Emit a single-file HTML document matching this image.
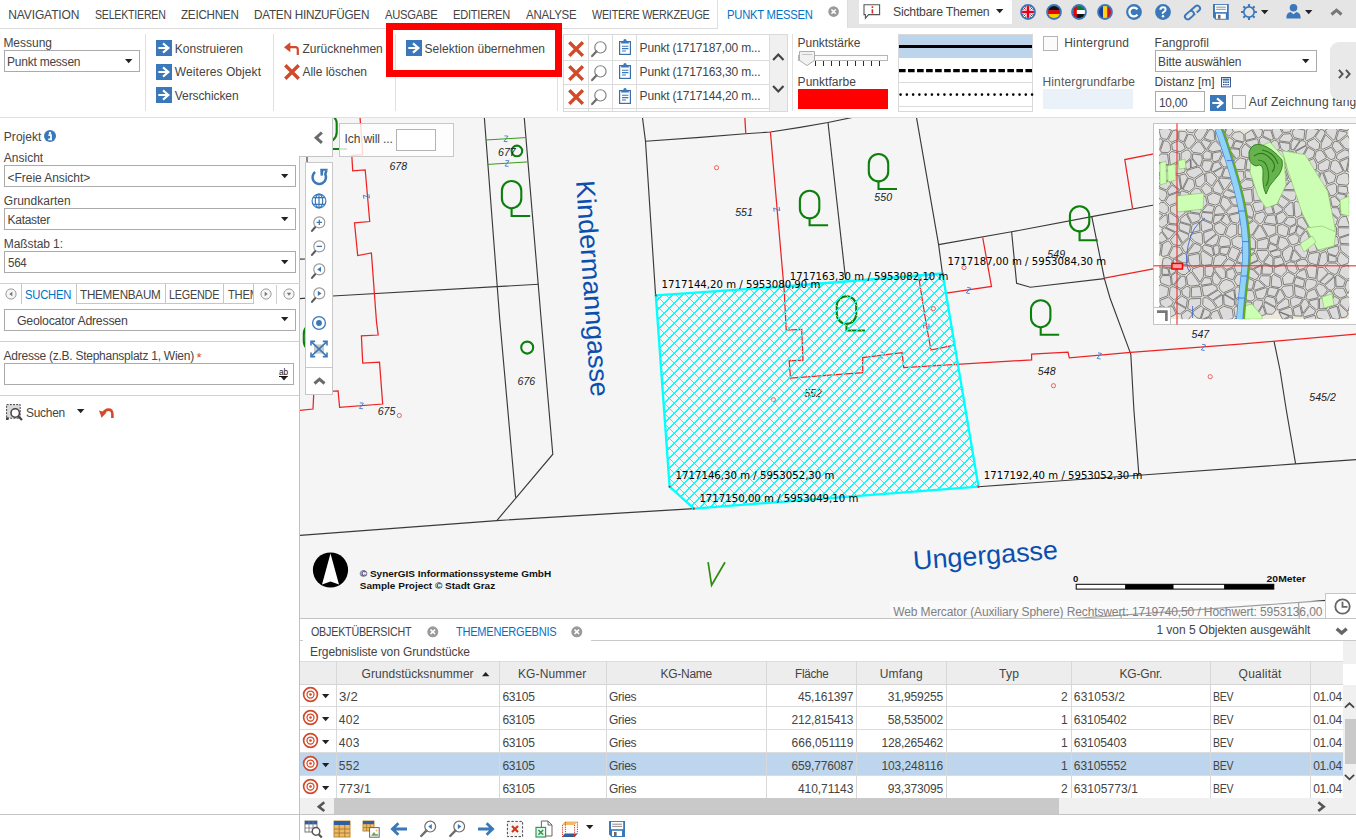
<!DOCTYPE html>
<html lang="de"><head><meta charset="utf-8"><title>WebOffice - Punkt messen</title>
<style>
html,body{margin:0;padding:0}
body{width:1356px;height:840px;position:relative;overflow:hidden;background:#fff;font-family:"Liberation Sans",Arial,sans-serif;font-size:12.5px;color:#444}
.a{position:absolute;display:block}
.t{position:absolute;white-space:nowrap;display:block}
svg{overflow:visible}
</style></head><body>
<!-- gen_top -->
<div class="a " style="left:0px;top:28px;width:718px;height:1px;background:#dcdcdc"></div>
<div class="a " style="left:847px;top:0px;width:509px;height:28px;background:#e5e5e5"></div>
<div class="a " style="left:717px;top:0px;width:1px;height:28px;background:#e0e0e0"></div>
<div class="a " style="left:847px;top:0px;width:1px;height:28px;background:#dcdcdc"></div>
<span class="t " style="left:8.2px;top:6.6px;font-size:12px;line-height:16px;letter-spacing:-0.103px;color:#444;">NAVIGATION</span>
<span class="t " style="left:94.5px;top:6.6px;font-size:12px;line-height:16px;letter-spacing:-0.25px;transform:scaleX(0.8829);transform-origin:0 50%;color:#444;">SELEKTIEREN</span>
<span class="t " style="left:180.7px;top:6.6px;font-size:12px;line-height:16px;letter-spacing:-0.25px;transform:scaleX(0.9700);transform-origin:0 50%;color:#444;">ZEICHNEN</span>
<span class="t " style="left:254.0px;top:6.6px;font-size:12px;line-height:16px;letter-spacing:-0.25px;transform:scaleX(0.9778);transform-origin:0 50%;color:#444;">DATEN HINZUFÜGEN</span>
<span class="t " style="left:385.4px;top:6.6px;font-size:12px;line-height:16px;letter-spacing:-0.25px;transform:scaleX(0.9324);transform-origin:0 50%;color:#444;">AUSGABE</span>
<span class="t " style="left:453.1px;top:6.6px;font-size:12px;line-height:16px;letter-spacing:-0.25px;transform:scaleX(0.9225);transform-origin:0 50%;color:#444;">EDITIEREN</span>
<span class="t " style="left:525.8px;top:6.6px;font-size:12px;line-height:16px;letter-spacing:-0.25px;transform:scaleX(0.9572);transform-origin:0 50%;color:#444;">ANALYSE</span>
<span class="t " style="left:591.8px;top:6.6px;font-size:12px;line-height:16px;letter-spacing:-0.25px;transform:scaleX(0.8961);transform-origin:0 50%;color:#444;">WEITERE WERKZEUGE</span>
<span class="t " style="left:726.5px;top:6.6px;font-size:12px;line-height:16px;letter-spacing:-0.25px;transform:scaleX(0.9355);transform-origin:0 50%;color:#0072c6;">PUNKT MESSEN</span>
<svg class="a" style="left:827.8px;top:5.8px" width="11.2" height="11.2" viewBox="-6 -6 12 12"><circle r="5.7" fill="#9a9a9a"/><path d="M-2.3 -2.3L2.3 2.3M2.3 -2.3L-2.3 2.3" stroke="#fff" stroke-width="1.7"/></svg>
<div class="a " style="left:859px;top:0px;width:153px;height:24px;background:#fff"></div>
<svg class="a" style="left:863px;top:4px" width="18" height="16" viewBox="0 0 18 16"><path d="M1 0.8H16.6V10.6H5.6L2.4 14.2V10.6H1Z" fill="#fff" stroke="#555" stroke-width="1.1"/><path d="M9.4 2.2V3.9M9.4 5.2V9.6" stroke="#e02a1a" stroke-width="1.6"/></svg>
<span class="t " style="left:892.6px;top:4.0px;font-size:13px;line-height:16px;letter-spacing:-0.25px;transform:scaleX(0.9448);transform-origin:0 50%;color:#444;">Sichtbare Themen</span>
<svg class="a" style="left:996.1px;top:8.9px" width="7.4" height="4.2" viewBox="0 0 7.4 4.2"><path d="M0 0H7.4L3.7 4.2Z" fill="#222"/></svg>
<svg class="a" style="left:1019.9px;top:4px" width="16" height="16" viewBox="-8 -8 16 16"><defs><clipPath id="fc1027"><circle r="6"/></clipPath></defs><circle r="7.9" fill="#3b78b9"/><g clip-path="url(#fc1027)"><rect x="-6" y="-6" width="12" height="12" fill="#2a4f9c"/><path d="M-6 -6L6 6M6 -6L-6 6" stroke="#fff" stroke-width="2.6"/><path d="M-6 -6L6 6M6 -6L-6 6" stroke="#e3001b" stroke-width="1"/><path d="M0 -6V6M-6 0H6" stroke="#fff" stroke-width="4.4"/><path d="M0 -6V6M-6 0H6" stroke="#e3001b" stroke-width="2.6"/></g></svg>
<svg class="a" style="left:1046px;top:4px" width="16" height="16" viewBox="-8 -8 16 16"><defs><clipPath id="fc1054"><circle r="6"/></clipPath></defs><circle r="7.9" fill="#3b78b9"/><g clip-path="url(#fc1054)"><rect x="-6" y="-6" width="12" height="4.2" fill="#111"/><rect x="-6" y="-1.8" width="12" height="3.8" fill="#e00"/><rect x="-6" y="2" width="12" height="4" fill="#fc0"/></g></svg>
<svg class="a" style="left:1071.1px;top:4px" width="16" height="16" viewBox="-8 -8 16 16"><defs><clipPath id="fc1079"><circle r="6"/></clipPath></defs><circle r="7.9" fill="#3b78b9"/><g clip-path="url(#fc1079)"><rect x="-6" y="-6" width="12" height="4" fill="#0a7a3a"/><rect x="-6" y="-2" width="12" height="4" fill="#fff"/><rect x="-6" y="2" width="12" height="4" fill="#111"/><rect x="-6" y="-6" width="3.8" height="12" fill="#e00"/></g></svg>
<svg class="a" style="left:1097px;top:4px" width="16" height="16" viewBox="-8 -8 16 16"><defs><clipPath id="fc1105"><circle r="6"/></clipPath></defs><circle r="7.9" fill="#3b78b9"/><g clip-path="url(#fc1105)"><rect x="-6" y="-6" width="4" height="12" fill="#1c3f94"/><rect x="-2" y="-6" width="4.4" height="12" fill="#fcd116"/><rect x="2.4" y="-6" width="4" height="12" fill="#ce1126"/></g></svg>
<svg class="a" style="left:1125.9px;top:4px" width="16" height="16" viewBox="-8 -8 16 16"><circle r="7.9" fill="#3b78b9"/><path d="M3.4 -2.6A4.4 4.4 0 1 0 3.4 2.6" fill="none" stroke="#fff" stroke-width="2.4"/></svg>
<svg class="a" style="left:1154.9px;top:4px" width="16" height="16" viewBox="-8 -8 16 16"><circle r="7.9" fill="#3b78b9"/><path d="M-2.6 -2.2Q-2.6 -4.8 0 -4.8T2.6 -2.4Q2.6 -1 0.9 -0.2T0 1.8" fill="none" stroke="#fff" stroke-width="2"/><circle cx="0" cy="4.2" r="1.25" fill="#fff"/></svg>
<svg class="a" style="left:1183.6px;top:3.8px" width="17" height="17" viewBox="0 0 17 17"><g fill="none" stroke="#3b78b9" stroke-width="1.9" transform="rotate(-41 8.5 8.5)"><rect x="-0.6" y="5.7" width="10" height="5.6" rx="2.8"/><path d="M8.4 5.7H14.8A2.8 2.8 0 0 1 14.8 11.3H11.6M9.6 11.3H8.4"/></g></svg>
<svg class="a" style="left:1213.2px;top:4.1px" width="15.8" height="15.8" viewBox="0 0 16 16"><path d="M0 0H16V16H2.6L0 13.4Z" fill="#3b78b9"/><rect x="2" y="0.9" width="12.2" height="7.3" fill="#fff"/><path d="M3.2 3.2H13M3.2 5.4H13" stroke="#8c8c8c" stroke-width="1"/><rect x="3" y="9.8" width="10" height="5.2" fill="#fff"/><rect x="5" y="11" width="2.6" height="4" fill="#6a6a6a"/></svg>
<svg class="a" style="left:1241px;top:3.9px" width="16" height="16" viewBox="-8 -8 16 16"><circle r="5.2" fill="none" stroke="#3b78b9" stroke-width="1.7"/><g fill="#3b78b9"><rect x="-1.05" y="-8" width="2.1" height="2.4" rx=".6" transform="rotate(0)"/><rect x="-1.05" y="-8" width="2.1" height="2.4" rx=".6" transform="rotate(45)"/><rect x="-1.05" y="-8" width="2.1" height="2.4" rx=".6" transform="rotate(90)"/><rect x="-1.05" y="-8" width="2.1" height="2.4" rx=".6" transform="rotate(135)"/><rect x="-1.05" y="-8" width="2.1" height="2.4" rx=".6" transform="rotate(180)"/><rect x="-1.05" y="-8" width="2.1" height="2.4" rx=".6" transform="rotate(225)"/><rect x="-1.05" y="-8" width="2.1" height="2.4" rx=".6" transform="rotate(270)"/><rect x="-1.05" y="-8" width="2.1" height="2.4" rx=".6" transform="rotate(315)"/></g></svg>
<svg class="a" style="left:1260.9px;top:9.9px" width="7.4" height="4.2" viewBox="0 0 7.4 4.2"><path d="M0 0H7.4L3.7 4.2Z" fill="#222"/></svg>
<svg class="a" style="left:1285.5px;top:4px" width="15" height="15" viewBox="0 0 15 15"><circle cx="7.5" cy="3.8" r="3.8" fill="#3b78b9"/><path d="M0.4 14.6Q0 8.6 4.6 8L7.5 10.2L10.4 8Q15 8.6 14.6 14.6Z" fill="#3b78b9"/></svg>
<svg class="a" style="left:1304.8px;top:9.9px" width="7.4" height="4.2" viewBox="0 0 7.4 4.2"><path d="M0 0H7.4L3.7 4.2Z" fill="#222"/></svg>
<svg class="a" style="left:1330px;top:7.7px" width="13" height="8" viewBox="0 0 13 8"><path d="M1.5 6.5L6.5 2.14286L11.5 6.5" fill="none" stroke="#777" stroke-width="3"/></svg>
<div class="a " style="left:0px;top:117px;width:1356px;height:1px;background:#e0e0e0"></div>
<div class="a " style="left:145px;top:34px;width:1px;height:77px;background:#e0e0e0"></div>
<div class="a " style="left:273px;top:34px;width:1px;height:77px;background:#e0e0e0"></div>
<div class="a " style="left:395px;top:34px;width:1px;height:77px;background:#e0e0e0"></div>
<div class="a " style="left:557px;top:34px;width:1px;height:77px;background:#e0e0e0"></div>
<div class="a " style="left:792px;top:34px;width:1px;height:77px;background:#e0e0e0"></div>
<span class="t " style="left:3.4px;top:35.0px;font-size:12px;line-height:16px;letter-spacing:-0.015px;color:#444;">Messung</span>
<div class="a " style="left:4px;top:50px;width:136px;height:22px;border:1px solid #ababab;box-sizing:border-box;background:#fff"></div>
<span class="t " style="left:7.0px;top:54.2px;font-size:12px;line-height:16px;letter-spacing:-0.231px;color:#444;">Punkt messen</span>
<svg class="a" style="left:125.3px;top:58.7px" width="7.4" height="4.2" viewBox="0 0 7.4 4.2"><path d="M0 0H7.4L3.7 4.2Z" fill="#222"/></svg>
<svg class="a" style="left:156px;top:40px" width="16" height="16" viewBox="0 0 16 16"><rect width="16" height="16" fill="#3b78b9"/><path d="M2.3 8H12.4M7 3.4L12.4 8L7 12.6" fill="none" stroke="#fff" stroke-width="2.1"/></svg>
<span class="t " style="left:174.8px;top:41.3px;font-size:12px;line-height:16px;letter-spacing:0.015px;color:#444;">Konstruieren</span>
<svg class="a" style="left:156px;top:64px" width="16" height="16" viewBox="0 0 16 16"><rect width="16" height="16" fill="#3b78b9"/><path d="M2.3 8H12.4M7 3.4L12.4 8L7 12.6" fill="none" stroke="#fff" stroke-width="2.1"/></svg>
<span class="t " style="left:174.8px;top:63.8px;font-size:12px;line-height:16px;letter-spacing:0.076px;color:#444;">Weiteres Objekt</span>
<svg class="a" style="left:156px;top:87px" width="16" height="16" viewBox="0 0 16 16"><rect width="16" height="16" fill="#3b78b9"/><path d="M2.3 8H12.4M7 3.4L12.4 8L7 12.6" fill="none" stroke="#fff" stroke-width="2.1"/></svg>
<span class="t " style="left:174.8px;top:88.3px;font-size:12px;line-height:16px;letter-spacing:-0.090px;color:#444;">Verschicken</span>
<svg class="a" style="left:284px;top:42.4px" width="16" height="14" viewBox="0 0 16 14"><path d="M2.5 5.2H11.5Q13.8 5.2 13.8 7.6V13" fill="none" stroke="#d04a2b" stroke-width="2.2"/><path d="M0 5.2L6.3 0.2V10.2Z" fill="#d04a2b"/></svg>
<span class="t " style="left:302.4px;top:41.3px;font-size:12px;line-height:16px;letter-spacing:0.033px;color:#444;">Zurücknehmen</span>
<svg class="a" style="left:284px;top:64px" width="16" height="16" viewBox="0 0 16 16"><path d="M1.3 1.3L14.7 14.7M14.7 1.3L1.3 14.7" fill="none" stroke="#d04a2b" stroke-width="3.4"/></svg>
<span class="t " style="left:302.4px;top:63.8px;font-size:12px;line-height:16px;letter-spacing:-0.010px;color:#444;">Alle löschen</span>
<svg class="a" style="left:406px;top:40px" width="16" height="16" viewBox="0 0 16 16"><rect width="16" height="16" fill="#3b78b9"/><path d="M2.3 8H12.4M7 3.4L12.4 8L7 12.6" fill="none" stroke="#fff" stroke-width="2.1"/></svg>
<span class="t " style="left:424.6px;top:41.0px;font-size:12px;line-height:16px;letter-spacing:0.017px;color:#444;">Selektion übernehmen</span>
<div class="a " style="left:563px;top:34px;width:225px;height:78px;border:1px solid #d9d9d9;box-sizing:border-box;background:#fff;overflow:hidden"></div>
<div class="a " style="left:769px;top:35px;width:18px;height:76px;background:#f0f0f0"></div>
<div class="a " style="left:588px;top:35px;width:1px;height:76px;background:#dcdcdc"></div>
<div class="a " style="left:612px;top:35px;width:1px;height:76px;background:#dcdcdc"></div>
<div class="a " style="left:636px;top:35px;width:1px;height:76px;background:#dcdcdc"></div>
<div class="a " style="left:769px;top:35px;width:1px;height:76px;background:#dcdcdc"></div>
<div class="a " style="left:564px;top:60px;width:205px;height:1px;background:#dcdcdc"></div>
<div class="a " style="left:564px;top:84px;width:205px;height:1px;background:#dcdcdc"></div>
<div class="a " style="left:564px;top:108px;width:205px;height:1px;background:#dcdcdc"></div>
<svg class="a" style="left:567.9px;top:40.8px" width="16.2" height="16.2" viewBox="0 0 16 16"><path d="M1.3 1.3L14.7 14.7M14.7 1.3L1.3 14.7" fill="none" stroke="#d04a2b" stroke-width="3.4"/></svg>
<svg class="a" style="left:590.2px;top:40.9px" width="17" height="17" viewBox="0 0 16 16"><circle cx="9.8" cy="6" r="5.3" fill="#fff" fill-opacity=".6" stroke="#858585" stroke-width="1.15"/><path d="M6 9.8L2 14.2" stroke="#6e6e6e" stroke-width="2.1" stroke-linecap="round"/></svg>
<svg class="a" style="left:619.3px;top:39.2px" width="12" height="16" viewBox="0 0 12 16"><rect x="0.6" y="2.6" width="10.8" height="12.8" fill="#fff" stroke="#3c6ea8" stroke-width="1.2"/><path d="M2.2 4.6V2.4H4.2Q4.4 0 6 0T7.8 2.4H9.8V4.6Z" fill="#3b78b9"/><path d="M3 7.2H9.4M3 9.6H9.4M3 12H7" stroke="#3b78b9" stroke-width="1.1"/></svg>
<span class="t " style="left:639.6px;top:39.8px;font-size:12px;line-height:16px;letter-spacing:-0.178px;color:#444;">Punkt (1717187,00 m...</span>
<svg class="a" style="left:567.9px;top:65px" width="16.2" height="16.2" viewBox="0 0 16 16"><path d="M1.3 1.3L14.7 14.7M14.7 1.3L1.3 14.7" fill="none" stroke="#d04a2b" stroke-width="3.4"/></svg>
<svg class="a" style="left:590.2px;top:65.1px" width="17" height="17" viewBox="0 0 16 16"><circle cx="9.8" cy="6" r="5.3" fill="#fff" fill-opacity=".6" stroke="#858585" stroke-width="1.15"/><path d="M6 9.8L2 14.2" stroke="#6e6e6e" stroke-width="2.1" stroke-linecap="round"/></svg>
<svg class="a" style="left:619.3px;top:63.4px" width="12" height="16" viewBox="0 0 12 16"><rect x="0.6" y="2.6" width="10.8" height="12.8" fill="#fff" stroke="#3c6ea8" stroke-width="1.2"/><path d="M2.2 4.6V2.4H4.2Q4.4 0 6 0T7.8 2.4H9.8V4.6Z" fill="#3b78b9"/><path d="M3 7.2H9.4M3 9.6H9.4M3 12H7" stroke="#3b78b9" stroke-width="1.1"/></svg>
<span class="t " style="left:639.6px;top:64.0px;font-size:12px;line-height:16px;letter-spacing:-0.178px;color:#444;">Punkt (1717163,30 m...</span>
<svg class="a" style="left:567.9px;top:89.2px" width="16.2" height="16.2" viewBox="0 0 16 16"><path d="M1.3 1.3L14.7 14.7M14.7 1.3L1.3 14.7" fill="none" stroke="#d04a2b" stroke-width="3.4"/></svg>
<svg class="a" style="left:590.2px;top:89.3px" width="17" height="17" viewBox="0 0 16 16"><circle cx="9.8" cy="6" r="5.3" fill="#fff" fill-opacity=".6" stroke="#858585" stroke-width="1.15"/><path d="M6 9.8L2 14.2" stroke="#6e6e6e" stroke-width="2.1" stroke-linecap="round"/></svg>
<svg class="a" style="left:619.3px;top:87.6px" width="12" height="16" viewBox="0 0 12 16"><rect x="0.6" y="2.6" width="10.8" height="12.8" fill="#fff" stroke="#3c6ea8" stroke-width="1.2"/><path d="M2.2 4.6V2.4H4.2Q4.4 0 6 0T7.8 2.4H9.8V4.6Z" fill="#3b78b9"/><path d="M3 7.2H9.4M3 9.6H9.4M3 12H7" stroke="#3b78b9" stroke-width="1.1"/></svg>
<span class="t " style="left:639.6px;top:88.2px;font-size:12px;line-height:16px;letter-spacing:-0.178px;color:#444;">Punkt (1717144,20 m...</span>
<svg class="a" style="left:772.4px;top:53px" width="12.6" height="8" viewBox="0 0 12.6 8"><path d="M1.1 6.9L6.3 1.57143L11.5 6.9" fill="none" stroke="#444" stroke-width="2.2"/></svg>
<svg class="a" style="left:772.4px;top:85.4px" width="12.6" height="8" viewBox="0 0 12.6 8"><path d="M1.1 1.1L6.3 6.42857L11.5 1.1" fill="none" stroke="#444" stroke-width="2.2"/></svg>
<span class="t " style="left:797.6px;top:34.8px;font-size:12px;line-height:16px;letter-spacing:-0.046px;color:#444;">Punktstärke</span>
<div class="a " style="left:798px;top:55px;width:90px;height:6px;border:1px solid #b5b5b5;box-sizing:border-box;background:#fdfdfd"></div>
<svg class="a" style="left:799px;top:51px" width="16" height="15" viewBox="0 0 16 15"><path d="M0.5 0.5H15.5V9.4L8 14.6L0.5 9.4Z" fill="#f1f1f1" stroke="#adadad" stroke-width="1"/><path d="M3 3.5H13" stroke="#c4c4c4" stroke-width="1"/></svg>
<svg class="a" style="left:815px;top:61px" width="70" height="5" viewBox="0 0 70 5"><rect x="0" y="0" width="1" height="5" fill="#2c2c2c"/><rect x="8" y="0" width="1" height="5" fill="#2c2c2c"/><rect x="16" y="0" width="1" height="5" fill="#2c2c2c"/><rect x="24" y="0" width="1" height="5" fill="#2c2c2c"/><rect x="32" y="0" width="1" height="5" fill="#2c2c2c"/><rect x="40" y="0" width="1" height="5" fill="#2c2c2c"/><rect x="48" y="0" width="1" height="5" fill="#2c2c2c"/><rect x="56" y="0" width="1" height="5" fill="#2c2c2c"/><rect x="64" y="0" width="1" height="5" fill="#2c2c2c"/></svg>
<span class="t " style="left:797.6px;top:74.0px;font-size:12px;line-height:16px;letter-spacing:0.040px;color:#444;">Punktfarbe</span>
<div class="a " style="left:798px;top:89px;width:90px;height:19.6px;background:#fe0000"></div>
<div class="a " style="left:898px;top:34px;width:135px;height:78px;border:1px solid #d9d9d9;box-sizing:border-box;background:#fff"></div>
<div class="a " style="left:899px;top:35px;width:133px;height:23px;background:#bdd5ec"></div>
<div class="a " style="left:899px;top:82px;width:133px;height:1px;background:#dcdcdc"></div>
<div class="a " style="left:899px;top:106px;width:133px;height:1px;background:#dcdcdc"></div>
<div class="a " style="left:899px;top:45px;width:133px;height:3.2px;background:#000"></div>
<svg class="a" style="left:899px;top:66px" width="133" height="36" viewBox="0 0 133 36"><path d="M0 4.6H133" stroke="#000" stroke-width="3.2" stroke-dasharray="6.6 2.43"/><path d="M1.6 28.6H134.6" stroke="#000" stroke-width="2.6" stroke-dasharray="0.01 6.25" stroke-linecap="round"/></svg>
<div class="a " style="left:1043px;top:36.4px;width:14.6px;height:14.6px;border:1px solid #b4b4b4;box-sizing:border-box;background:#fbfbfb"></div>
<span class="t " style="left:1064.2px;top:35.0px;font-size:12px;line-height:16px;letter-spacing:0.210px;color:#444;">Hintergrund</span>
<span class="t " style="left:1042.4px;top:74.0px;font-size:12px;line-height:16px;letter-spacing:0.170px;color:#585858;">Hintergrundfarbe</span>
<div class="a " style="left:1043px;top:89px;width:90px;height:19.6px;background:#eaf1f9"></div>
<span class="t " style="left:1154.6px;top:34.8px;font-size:12px;line-height:16px;letter-spacing:0.115px;color:#444;">Fangprofil</span>
<div class="a " style="left:1155px;top:50px;width:161.5px;height:22px;border:1px solid #ababab;box-sizing:border-box;background:#fff"></div>
<span class="t " style="left:1158.0px;top:54.4px;font-size:12px;line-height:16px;letter-spacing:-0.087px;color:#444;">Bitte auswählen</span>
<svg class="a" style="left:1301.7px;top:58.9px" width="7.4" height="4.2" viewBox="0 0 7.4 4.2"><path d="M0 0H7.4L3.7 4.2Z" fill="#222"/></svg>
<span class="t " style="left:1154.6px;top:74.0px;font-size:12px;line-height:16px;color:#444;">Distanz [m]</span>
<svg class="a" style="left:1220.6px;top:77px" width="10" height="10.4" viewBox="0 0 10 10.4"><rect x=".5" y=".5" width="9" height="9.4" fill="#fff" stroke="#3c5a8c" stroke-width="1"/><rect x="1.6" y="1.6" width="6.8" height="2" fill="#3b78b9"/><path d="M2 5.2H3.6M4.2 5.2H5.8M6.4 5.2H8M2 7.6H3.6M4.2 7.6H5.8M6.4 7.6H8" stroke="#3c5a8c" stroke-width="1.4"/></svg>
<div class="a " style="left:1155px;top:91px;width:49.6px;height:21px;border:1px solid #ababab;box-sizing:border-box;background:#fff"></div>
<span class="t " style="left:1158.6px;top:95.3px;font-size:12px;line-height:16px;letter-spacing:-0.25px;transform:scaleX(0.9852);transform-origin:0 50%;color:#444;">10,00</span>
<svg class="a" style="left:1210.3px;top:94.6px" width="16" height="16" viewBox="0 0 16 16"><rect width="16" height="16" fill="#3b78b9"/><path d="M2.3 8H12.4M7 3.4L12.4 8L7 12.6" fill="none" stroke="#fff" stroke-width="2.1"/></svg>
<div class="a " style="left:1231.6px;top:94.6px;width:14px;height:14.2px;border:1px solid #b4b4b4;box-sizing:border-box;background:#fbfbfb"></div>
<span class="t " style="left:1248.8px;top:94.4px;font-size:12px;line-height:16px;letter-spacing:0.199px;color:#444;">Auf Zeichnung fangen</span>
<div class="a " style="left:1330px;top:42px;width:26px;height:58px;background:#e9e9e9;border-radius:9px 0 0 9px"></div>
<svg class="a" style="left:1338.4px;top:69.2px" width="6" height="10" viewBox="0 0 6 10"><path d="M0.95 0.95L4.64286 5L0.95 9.05" fill="none" stroke="#555" stroke-width="1.9"/></svg>
<svg class="a" style="left:1344.6px;top:69.2px" width="6" height="10" viewBox="0 0 6 10"><path d="M0.95 0.95L4.64286 5L0.95 9.05" fill="none" stroke="#555" stroke-width="1.9"/></svg>
<div class="a " style="left:386px;top:23px;width:176px;height:54px;border:7px solid #fe0000;box-sizing:border-box"></div>
<!-- gen_left -->
<div class="a " style="left:299px;top:156px;width:1px;height:684px;background:#c2c2c2"></div>
<div class="a " style="left:0px;top:814px;width:300px;height:1px;background:#c4c4c4"></div>
<span class="t " style="left:3.8px;top:128.8px;font-size:12px;line-height:16px;letter-spacing:0.042px;color:#444;">Projekt</span>
<svg class="a" style="left:43.8px;top:130.2px" width="12" height="12" viewBox="-6 -6 12 12"><circle r="6" fill="#3b78b9"/><circle cx="0" cy="-3" r="1.2" fill="#fff"/><path d="M-1.6 -0.9H1V3.4M-1.8 3.4H2" fill="none" stroke="#fff" stroke-width="1.7"/></svg>
<span class="t " style="left:3.8px;top:150.0px;font-size:12px;line-height:16px;letter-spacing:0.008px;color:#444;">Ansicht</span>
<div class="a " style="left:4px;top:165px;width:292px;height:22px;border:1px solid #ababab;box-sizing:border-box;background:#fff"></div>
<span class="t " style="left:7.6px;top:169.5px;font-size:12px;line-height:16px;letter-spacing:-0.056px;color:#444;">&lt;Freie Ansicht&gt;</span>
<svg class="a" style="left:280.7px;top:173.7px" width="7.4" height="4.2" viewBox="0 0 7.4 4.2"><path d="M0 0H7.4L3.7 4.2Z" fill="#222"/></svg>
<div class="a " style="left:4px;top:208px;width:292px;height:22px;border:1px solid #ababab;box-sizing:border-box;background:#fff"></div>
<span class="t " style="left:7.6px;top:212.0px;font-size:12px;line-height:16px;letter-spacing:-0.298px;color:#444;">Kataster</span>
<svg class="a" style="left:280.7px;top:216.7px" width="7.4" height="4.2" viewBox="0 0 7.4 4.2"><path d="M0 0H7.4L3.7 4.2Z" fill="#222"/></svg>
<div class="a " style="left:4px;top:251px;width:292px;height:22px;border:1px solid #ababab;box-sizing:border-box;background:#fff"></div>
<span class="t " style="left:7.6px;top:255.0px;font-size:12px;line-height:16px;letter-spacing:-0.25px;transform:scaleX(0.9630);transform-origin:0 50%;color:#444;">564</span>
<svg class="a" style="left:280.7px;top:259.7px" width="7.4" height="4.2" viewBox="0 0 7.4 4.2"><path d="M0 0H7.4L3.7 4.2Z" fill="#222"/></svg>
<span class="t " style="left:3.8px;top:192.8px;font-size:12px;line-height:16px;letter-spacing:0.010px;color:#444;">Grundkarten</span>
<span class="t " style="left:3.8px;top:235.9px;font-size:12px;line-height:16px;letter-spacing:-0.091px;color:#444;">Maßstab 1:</span>
<div class="a " style="left:0px;top:283px;width:300px;height:1px;background:#d0d0d0"></div>
<div class="a " style="left:76px;top:303px;width:178px;height:1px;background:#c6c6c6"></div>
<div class="a " style="left:21px;top:284px;width:1px;height:20px;background:#c6c6c6"></div>
<div class="a " style="left:76px;top:284px;width:1px;height:20px;background:#c6c6c6"></div>
<div class="a " style="left:165px;top:284px;width:1px;height:20px;background:#c6c6c6"></div>
<div class="a " style="left:223px;top:284px;width:1px;height:20px;background:#c6c6c6"></div>
<div class="a " style="left:253px;top:284px;width:1px;height:20px;background:#c6c6c6"></div>
<div class="a " style="left:276.2px;top:284.5px;width:1px;height:19px;background:#d0d0d0"></div>
<svg class="a" style="left:4.6px;top:288.4px" width="12" height="12" viewBox="-6 -6 12 12"><circle r="5.1" fill="#f6f6f6" stroke="#9a9a9a" stroke-width="1"/><path d="M1.3 -2.2V2.2L-1.7 0Z" fill="#777"/></svg>
<svg class="a" style="left:259.5px;top:288.4px" width="12" height="12" viewBox="-6 -6 12 12"><circle r="5.1" fill="#f6f6f6" stroke="#9a9a9a" stroke-width="1"/><path d="M-1.3 -2.2V2.2L1.7 0Z" fill="#777"/></svg>
<svg class="a" style="left:282.7px;top:288.4px" width="12" height="12" viewBox="-6 -6 12 12"><circle r="5.1" fill="#f6f6f6" stroke="#9a9a9a" stroke-width="1"/><path d="M-2.2 -1.2H2.2L0 1.8Z" fill="#777"/></svg>
<span class="t " style="left:25.4px;top:286.6px;font-size:12px;line-height:16px;letter-spacing:-0.25px;transform:scaleX(0.9389);transform-origin:0 50%;color:#0072c6;">SUCHEN</span>
<span class="t " style="left:80.2px;top:286.6px;font-size:12px;line-height:16px;letter-spacing:-0.25px;transform:scaleX(0.9725);transform-origin:0 50%;color:#444;">THEMENBAUM</span>
<span class="t " style="left:169.2px;top:286.6px;font-size:12px;line-height:16px;letter-spacing:-0.25px;transform:scaleX(0.9024);transform-origin:0 50%;color:#444;">LEGENDE</span>
<div class="a" style="left:228.2px;top:286px;width:24.8px;height:17px;overflow:hidden"><span class="t " style="left:0.0px;top:0.6px;font-size:12px;line-height:16px;letter-spacing:-0.25px;transform:scaleX(0.9309);transform-origin:0 50%;color:#444;">THEMEN</span></div>
<div class="a " style="left:4px;top:309px;width:292px;height:22px;border:1px solid #ababab;box-sizing:border-box;background:#fff"></div>
<span class="t " style="left:16.6px;top:313.0px;font-size:12.5px;line-height:16px;letter-spacing:-0.25px;transform:scaleX(0.9872);transform-origin:0 50%;color:#444;">Geolocator Adressen</span>
<svg class="a" style="left:280.7px;top:317.3px" width="7.4" height="4.2" viewBox="0 0 7.4 4.2"><path d="M0 0H7.4L3.7 4.2Z" fill="#222"/></svg>
<div class="a " style="left:0px;top:341px;width:299px;height:1px;background:#d0d0d0"></div>
<span class="t " style="left:3.6px;top:347.8px;font-size:12px;line-height:16px;letter-spacing:-0.252px;color:#444;">Adresse (z.B. Stephansplatz 1, Wien)</span>
<span class="t " style="left:196.6px;top:349.6px;font-size:13px;line-height:16px;color:#d04a2b;">*</span>
<div class="a " style="left:4px;top:363px;width:290px;height:22px;border:1px solid #ababab;box-sizing:border-box;background:#fff"></div>
<span class="t " style="left:279.0px;top:364.4px;font-size:9px;line-height:16px;letter-spacing:-0.25px;transform:scaleX(0.9220);transform-origin:0 50%;color:#111;text-decoration:underline;">ab</span>
<svg class="a" style="left:280.6px;top:376.9px" width="6" height="3.4" viewBox="0 0 6 3.4"><path d="M0 0H6L3 3.4Z" fill="#222"/></svg>
<div class="a " style="left:0px;top:395px;width:299px;height:1px;background:#d0d0d0"></div>
<svg class="a" style="left:6px;top:403.8px" width="17" height="17" viewBox="0 0 17 17"><rect x=".6" y=".6" width="13.6" height="13.6" fill="#d9d9d9" stroke="#444" stroke-width="1" stroke-dasharray="2 1.2"/><circle cx="9.2" cy="9" r="4.2" fill="#fff" stroke="#444" stroke-width="1.5"/><path d="M12.3 12.2L16 16" stroke="#444" stroke-width="2.2"/><rect x="0" y="13.4" width="2.6" height="2.6" fill="#444"/></svg>
<span class="t " style="left:25.6px;top:404.8px;font-size:12.5px;line-height:16px;letter-spacing:-0.25px;transform:scaleX(0.9527);transform-origin:0 50%;color:#444;">Suchen</span>
<svg class="a" style="left:76.8px;top:409.1px" width="7.4" height="4.2" viewBox="0 0 7.4 4.2"><path d="M0 0H7.4L3.7 4.2Z" fill="#222"/></svg>
<svg class="a" style="left:98.6px;top:408px" width="15" height="10" viewBox="0 0 15 10"><path d="M4.2 5.4Q6 1.6 9.6 1.6T13.4 6V10" fill="none" stroke="#d04a2b" stroke-width="2.6"/><path d="M0 2.6L7.6 4.4L2.6 9.8Z" fill="#d04a2b"/></svg>
<!-- gen_map -->
<svg class="a" style="left:300px;top:118px" width="1056" height="500" viewBox="300 118 1056 500"><defs><pattern id="hatch" width="10" height="10" patternUnits="userSpaceOnUse"><path d="M1 0h1v1h-1zM6 0h1v1h-1zM7 0h1v1h-1zM2 1h1v1h-1zM5 1h1v1h-1zM6 1h1v1h-1zM3 2h1v1h-1zM4 2h1v1h-1zM5 2h1v1h-1zM3 3h1v1h-1zM4 3h1v1h-1zM2 4h1v1h-1zM3 4h1v1h-1zM5 4h1v1h-1zM1 5h1v1h-1zM2 5h1v1h-1zM6 5h1v1h-1zM0 6h1v1h-1zM1 6h1v1h-1zM7 6h1v1h-1zM0 7h1v1h-1zM8 7h1v1h-1zM9 7h1v1h-1zM8 8h1v1h-1zM9 8h1v1h-1zM0 9h1v1h-1zM7 9h1v1h-1zM8 9h1v1h-1z" fill="#00ffff" shape-rendering="crispEdges"/></pattern><clipPath id="mapclip"><rect x="300" y="118" width="1056" height="500"/></clipPath></defs><rect x="300" y="118" width="1056" height="500" fill="#f5f5f5"/><g clip-path="url(#mapclip)"><g><polyline points="484.3,117.0 499.8,320.0 515.6,497.5" fill="none" stroke="#3a3a3a" stroke-width="1.15" /><polyline points="524.2,117.0 541.2,320.0 552.8,454.2 496.8,520.6" fill="none" stroke="#3a3a3a" stroke-width="1.15" /><polyline points="300.0,298.6 332.6,296.0 538.6,284.3" fill="none" stroke="#3a3a3a" stroke-width="1.15" /><polyline points="300.0,535.4 496.8,520.6 693.9,508.6" fill="none" stroke="#3a3a3a" stroke-width="1.15" /><polyline points="978.5,486.7 1138.9,475.2 1295.6,463.9 1356.0,459.6" fill="none" stroke="#3a3a3a" stroke-width="1.15" /><polyline points="642.4,117.0 645.5,141.3 655.6,295.4" fill="none" stroke="#3a3a3a" stroke-width="1.15" /><polyline points="645.5,141.3 700.0,137.4 745.3,133.8 770.4,132.0 800.0,127.4 828.0,122.5 854.4,117.0" fill="none" stroke="#3a3a3a" stroke-width="1.15" /><polyline points="828.0,122.5 845.6,279.2" fill="none" stroke="#3a3a3a" stroke-width="1.15" /><polyline points="916.4,117.0 938.6,244.6 942.4,273.0" fill="none" stroke="#3a3a3a" stroke-width="1.15" /><polyline points="938.6,244.6 1011.6,231.8 1091.8,216.6 1153.9,205.0 1356.0,168.0" fill="none" stroke="#3a3a3a" stroke-width="1.15" /><polyline points="1011.6,231.8 1016.6,283.4 1030.4,287.2 1104.4,278.6" fill="none" stroke="#3a3a3a" stroke-width="1.15" /><polyline points="1091.8,216.6 1104.4,278.6 1110.0,298.0 1129.4,350.4 1130.8,354.0 1133.9,410.0 1138.9,475.2" fill="none" stroke="#3a3a3a" stroke-width="1.15" /><polyline points="1274.0,341.2 1280.0,370.0 1286.3,410.0 1295.6,463.9" fill="none" stroke="#3a3a3a" stroke-width="1.15" /><polyline points="1040.0,622.0 1081.0,618.0 1324.0,600.6 1356.0,598.4" fill="none" stroke="#3a3a3a" stroke-width="1.15" /><polyline points="1121.0,615.0 1121.6,622.0" fill="none" stroke="#3a3a3a" stroke-width="1.15" /><polyline points="1298.6,602.4 1299.4,622.0" fill="none" stroke="#3a3a3a" stroke-width="1.15" /><polyline points="300.0,259.2 306.0,259.0" fill="none" stroke="#3a3a3a" stroke-width="1.15" /><polyline points="306.4,117.0 307.6,200.0 308.0,259.0" fill="none" stroke="#3a3a3a" stroke-width="1.15" /></g><g><polyline points="360.0,117.0 362.8,154.6 351.8,155.4 352.7,170.8 365.2,169.8 369.7,221.5 354.5,222.9 357.7,255.5 371.4,253.0 376.5,322.0 378.2,335.0 361.4,335.8 362.7,363.1 379.5,362.1 382.7,404.0 339.6,407.3 338.1,391.0 313.8,392.4 313.0,409.0 300.0,410.3" fill="none" stroke="#ee2222" stroke-width="1.25" /><polyline points="744.8,117.0 745.8,133.8" fill="none" stroke="#ee2222" stroke-width="1.25" /><polyline points="770.4,132.0 784.2,290.5 786.2,330.0 801.7,329.5 803.0,360.1 789.2,360.9 790.5,378.2 862.7,372.7 862.7,357.6 902.0,352.6 903.8,367.6 1031.6,359.9 1031.6,354.1 1068.0,352.1 1069.3,357.9 1130.7,352.4 1240.0,344.1 1356.0,334.2" fill="none" stroke="#ee2222" stroke-width="1.25" /><polyline points="919.0,279.0 925.9,322.0 930.9,350.0 954.4,345.2" fill="none" stroke="#ee2222" stroke-width="1.25" /><polyline points="982.7,237.5 991.5,286.4 946.4,293.2" fill="none" stroke="#ee2222" stroke-width="1.25" /><polyline points="1104.4,278.1 1153.3,268.9 1200.0,262.0" fill="none" stroke="#ee2222" stroke-width="1.25" /><polyline points="1160.0,152.6 1124.8,159.6 1132.6,208.6" fill="none" stroke="#ee2222" stroke-width="1.25" /></g><g fill="none" stroke="#f05050" stroke-width=".9"><circle cx="716.5" cy="167.7" r="2.1"/><circle cx="964.0" cy="267.6" r="2.1"/><circle cx="933.4" cy="308.6" r="2.1"/><circle cx="773.4" cy="399.7" r="2.1"/><circle cx="399.3" cy="415.5" r="2.1"/><circle cx="1053.5" cy="385.7" r="2.1"/><circle cx="1210.2" cy="376.7" r="2.1"/></g><g fill="none" stroke="#4a7fd0" stroke-width=".9"><path transform="translate(366.4 196.5) rotate(80)" d="M-1.8 -2.8H1.8L-1.8 2.8H1.8"/><path transform="translate(776.7 209.3) rotate(80)" d="M-1.8 -2.8H1.8L-1.8 2.8H1.8"/><path transform="translate(968.5 290.5) rotate(10)" d="M-1.8 -2.8H1.8L-1.8 2.8H1.8"/><path transform="translate(926.3 326.0) rotate(80)" d="M-1.8 -2.8H1.8L-1.8 2.8H1.8"/><path transform="translate(882.0 355.1) rotate(10)" d="M-1.8 -2.8H1.8L-1.8 2.8H1.8"/><path transform="translate(1099.3 355.9) rotate(10)" d="M-1.8 -2.8H1.8L-1.8 2.8H1.8"/><path transform="translate(1203.4 347.4) rotate(10)" d="M-1.8 -2.8H1.8L-1.8 2.8H1.8"/><path transform="translate(361.4 405.8) rotate(5)" d="M-1.8 -2.8H1.8L-1.8 2.8H1.8"/><path transform="translate(506.0 138.8) rotate(5)" d="M-1.8 -2.8H1.8L-1.8 2.8H1.8"/><path transform="translate(507.0 163.4) rotate(5)" d="M-1.8 -2.8H1.8L-1.8 2.8H1.8"/></g><g fill="none" stroke="#3a9a1a" stroke-width="1"><polyline points="485.6,140.0 525.7,137.6" fill="none" stroke="#3a9a1a" stroke-width="1" /><polyline points="488.0,164.4 527.7,161.9" fill="none" stroke="#3a9a1a" stroke-width="1" /></g><g fill="none" stroke="#0b800b" stroke-width="2.1"><rect x="317.3" y="114.0" width="19.4" height="28.0" rx="9.7"/><path d="M327.0 142.0V149.0H347.0"/><rect x="303.8" y="324.0" width="19.4" height="27.0" rx="9.7"/><path d="M313.5 351.0V358.0H330.0"/><rect x="501.9" y="181.0" width="19.4" height="27.2" rx="9.7"/><path d="M511.6 208.2V216.0H530.2"/><rect x="799.9" y="190.7" width="19.4" height="27.6" rx="9.7"/><path d="M809.6 218.3V225.3H828.1"/><rect x="868.8" y="154.0" width="19.4" height="27.4" rx="9.7"/><path d="M878.5 181.4V189.0H897.0"/><rect x="836.8" y="296.2" width="19.4" height="27.6" rx="9.7"/><path d="M846.5 323.8V330.5H864.9"/><rect x="1069.9" y="206.2" width="19.4" height="25.2" rx="9.7"/><path d="M1079.6 231.4V240.3H1097.7"/><rect x="1031.0" y="300.2" width="19.4" height="27.0" rx="9.7"/><path d="M1040.7 327.2V334.8H1059.2"/><circle cx="516.9" cy="150.9" r="5.3"/><circle cx="527.2" cy="347.6" r="6"/></g><polyline points="708.1,562.2 711.6,585.3 725.0,562.2" fill="none" stroke="#2f8a10" stroke-width="1.7" /><g font-family="Liberation Sans,Arial,sans-serif" font-style="italic" font-size="10.6" fill="#1c1c1c" text-anchor="middle"><text x="398.3" y="169.8">678</text><text x="506.9" y="155.8">677</text><text x="526.4" y="384.9">676</text><text x="386.5" y="414.7">675</text><text x="744.0" y="216.0">551</text><text x="883.2" y="200.9">550</text><text x="1056.2" y="257.5">549</text><text x="1046.7" y="374.9">548</text><text x="1200.4" y="337.5">547</text><text x="813.0" y="396.9">552</text><text x="1322.6" y="400.9">545/2</text></g><g font-family="Liberation Sans,Arial,sans-serif" font-size="26.5" fill="#0b4fae"><text transform="translate(575.9 181) rotate(86)" textLength="216.8" lengthAdjust="spacingAndGlyphs">Kindermanngasse</text><text transform="translate(913.8 569.8) rotate(-4.4)" textLength="145" lengthAdjust="spacingAndGlyphs">Ungergasse</text></g><polygon points="655.8,295.4 783.6,286.5 942.6,273.5 978.5,486.7 693.9,508.6 669.6,486.7" fill="url(#hatch)" stroke="#00ffff" stroke-width="2.3" stroke-linejoin="round"/><g fill="#c8201c"><rect x="654.9" y="294.5" width="1.8" height="1.8"/><rect x="782.7" y="285.6" width="1.8" height="1.8"/><rect x="941.7" y="272.6" width="1.8" height="1.8"/><rect x="977.6" y="485.8" width="1.8" height="1.8"/><rect x="693.0" y="507.7" width="1.8" height="1.8"/><rect x="668.7" y="485.8" width="1.8" height="1.8"/></g><g font-family="DejaVu Sans,Verdana,sans-serif" font-size="10" fill="#000"><text x="661.6" y="288.2" textLength="158.8" lengthAdjust="spacingAndGlyphs">1717144,20 m / 5953080,90 m</text><text x="789.8" y="280.2" textLength="158.6" lengthAdjust="spacingAndGlyphs">1717163,30 m / 5953082,10 m</text><text x="947.4" y="265.2" textLength="158.8" lengthAdjust="spacingAndGlyphs">1717187,00 m / 5953084,30 m</text><text x="675.6" y="479.4" textLength="158.8" lengthAdjust="spacingAndGlyphs">1717146,30 m / 5953052,30 m</text><text x="699.4" y="501.5" textLength="159.0" lengthAdjust="spacingAndGlyphs">1717150,00 m / 5953049,10 m</text><text x="983.8" y="479.3" textLength="158.6" lengthAdjust="spacingAndGlyphs">1717192,40 m / 5953052,30 m</text></g><circle cx="330.5" cy="570" r="17.6" fill="#000"/><path d="M330.5 553.6L339 584.4L330.5 581.5L322 584.4Z" fill="#fff"/><g font-family="Liberation Sans,Arial,sans-serif" font-weight="bold" font-size="9.6" fill="#111"><text x="359.8" y="576.9" textLength="191.4" lengthAdjust="spacingAndGlyphs">© SynerGIS Informationssysteme GmbH</text><text x="359.8" y="588.8" textLength="135.4" lengthAdjust="spacingAndGlyphs">Sample Project © Stadt Graz</text></g><rect x="1076.2" y="584.3" width="197.6" height="4.8" fill="#fff" stroke="#000" stroke-width="1"/><rect x="1125.1" y="584.3" width="48.4" height="4.8" fill="#000"/><rect x="1224.1" y="584.3" width="49.7" height="4.8" fill="#000"/><g font-family="Liberation Sans,Arial,sans-serif" font-weight="bold" font-size="9.6" fill="#111"><text x="1073" y="581.6">0</text><text x="1266.6" y="581.6" textLength="39.2" lengthAdjust="spacingAndGlyphs">20Meter</text></g></g></svg>
<svg class="a" style="left:1153px;top:123px" width="203" height="202" viewBox="1153 123 203 202"><rect x="1153.5" y="123.5" width="205" height="201" fill="#fff" stroke="#c4c4c4"/><defs><clipPath id="ovc"><rect x="1159.1" y="128.9" width="190.1" height="190.3"/></clipPath></defs><g clip-path="url(#ovc)"><rect x="1159.1" y="128.9" width="190.1" height="190.3" fill="#ece8dc"/><path d="M1349.3 149.4L1345.1 148.4L1339.8 141.7L1347.6 135.5L1351.5 142.5L1350.1 148.5ZM1339.1 140.5L1336.1 140.1L1338.7 130.6L1347.1 132.2L1346.8 134.3ZM1158.5 306.8L1147.8 315.1L1157.8 317.0ZM1345.6 111.2L1349.5 127.9L1347.3 130.8L1338.9 129.2L1335.7 126.2ZM1160.3 138.6L1152.1 143.7L1159.5 149.9L1162.9 140.2ZM1168.9 165.0L1158.1 162.1L1156.3 158.9L1160.8 153.8L1167.6 154.1ZM1192.6 311.9L1201.3 305.8L1203.5 308.2L1200.2 318.6L1196.8 317.8L1193.7 314.5ZM1167.7 295.7L1168.6 287.8L1160.3 284.6L1158.0 287.1L1158.2 298.7L1158.9 299.2ZM1162.2 274.4L1162.2 267.6L1167.9 268.8L1169.3 274.4ZM1161.0 274.4L1158.8 278.3L1141.2 270.6L1160.7 266.9L1161.1 267.7ZM1172.4 285.0L1171.4 275.6L1175.9 272.6L1180.5 275.7L1173.3 284.9ZM1171.3 285.2L1169.1 286.2L1160.8 283.0L1160.0 279.4L1162.3 275.5L1169.4 275.6L1170.3 275.8ZM1174.2 285.4L1181.0 288.6L1186.2 284.9L1185.0 276.3L1181.4 276.2ZM1175.0 269.0L1175.6 271.6L1171.1 274.6L1170.3 274.4L1168.8 268.7L1174.0 267.9ZM1157.5 205.8L1161.1 202.1L1164.3 202.7L1168.4 206.6L1168.3 211.2L1167.0 212.7L1164.0 214.0L1156.4 209.7ZM1161.0 181.5L1158.5 184.7L1148.6 175.0L1155.1 173.0L1157.5 174.1ZM1179.5 190.8L1168.6 194.8L1167.5 190.7L1172.1 185.0L1179.5 190.7ZM1179.3 192.0L1177.2 202.4L1169.5 205.5L1165.4 201.6L1168.4 196.0ZM1166.1 191.3L1158.8 188.3L1154.9 192.6L1160.9 200.4L1164.1 201.0L1167.1 195.4ZM1170.9 184.3L1169.3 181.1L1162.1 182.4L1159.6 185.7L1159.2 187.0L1166.4 190.0ZM1175.1 301.4L1186.2 307.7L1187.4 299.3L1181.7 295.9L1175.1 301.3ZM1174.2 300.1L1169.3 295.6L1170.2 287.7L1172.4 286.7L1173.2 286.6L1180.1 289.8L1180.8 294.7ZM1189.7 297.2L1188.1 298.1L1182.4 294.7L1181.6 289.9L1186.8 286.2L1190.1 287.5ZM1200.9 298.3L1200.6 304.6L1191.9 310.7L1187.8 308.7L1187.7 308.1L1188.9 299.7L1190.5 298.8ZM1168.9 223.2L1168.4 214.1L1169.7 212.7L1178.7 218.6L1178.5 221.4L1177.5 224.1ZM1209.3 317.4L1202.3 320.4L1205.4 329.9L1212.2 322.4ZM1210.7 311.9L1204.5 308.5L1201.1 318.8L1202.1 319.4L1209.1 316.4ZM1199.4 285.1L1190.9 286.1L1187.6 284.7L1186.4 276.2L1191.2 272.1L1199.3 283.3ZM1354.2 278.8L1346.8 280.8L1344.8 287.1L1347.8 293.6L1355.6 279.3ZM1168.4 139.7L1172.8 130.7L1176.0 130.0L1177.8 131.2L1177.7 139.5L1171.0 142.4ZM1167.1 139.4L1163.6 138.9L1160.9 137.3L1158.8 129.6L1158.8 129.4L1166.9 127.8L1171.5 130.4ZM1178.8 139.5L1183.6 142.0L1187.3 133.5L1185.0 131.4L1178.9 131.2ZM1171.6 143.8L1172.5 149.9L1180.0 151.8L1185.4 148.7L1183.1 143.4L1178.3 140.9ZM1167.4 141.2L1163.8 140.7L1160.5 150.4L1161.2 152.3L1168.1 152.6L1170.9 150.0L1170.0 143.9ZM1183.6 325.0L1192.3 314.8L1191.2 312.2L1187.1 310.2L1181.2 314.8ZM1155.9 223.4L1164.0 215.8L1167.0 214.5L1167.6 223.6L1164.3 226.3L1161.4 227.5ZM1146.3 221.4L1155.3 210.9L1162.8 215.2L1154.8 222.8ZM1171.8 259.7L1173.3 266.9L1168.1 267.7L1162.4 266.6L1162.1 265.8L1163.1 258.4L1167.6 257.4ZM1183.4 165.0L1185.3 170.2L1184.6 172.2L1179.0 173.7L1173.2 173.3L1171.1 169.4L1171.0 166.4L1179.9 162.4ZM1179.3 161.0L1179.4 153.3L1171.8 151.4L1169.0 154.0L1170.3 164.9L1170.4 165.0ZM1169.2 169.3L1158.4 172.9L1156.1 171.8L1158.2 163.4L1169.0 166.2L1169.1 166.3ZM1171.6 174.2L1169.5 179.9L1162.3 181.3L1158.8 173.9L1169.6 170.3ZM1178.7 175.4L1180.8 189.3L1179.8 189.7L1172.4 183.9L1170.8 180.7L1172.8 175.0ZM1227.5 122.9L1215.5 130.2L1224.3 132.9ZM1215.9 139.7L1222.6 146.0L1227.4 136.8L1224.0 133.9L1215.1 131.2L1215.1 131.2ZM1212.6 142.7L1207.9 149.7L1212.7 151.8L1221.0 150.3L1222.2 148.0L1222.1 147.4L1215.5 141.1ZM1207.8 129.7L1202.9 138.2L1200.4 140.3L1197.4 140.0L1194.1 134.0L1200.5 125.3ZM1192.7 134.9L1188.1 134.3L1184.5 142.8L1186.8 148.0L1189.4 148.5L1196.0 140.9ZM1203.6 139.5L1211.2 142.3L1206.5 149.4L1206.2 149.4L1201.1 141.6ZM1209.2 129.7L1212.2 129.7L1214.0 131.0L1214.8 139.5L1211.9 141.1L1204.3 138.3ZM1199.4 124.1L1192.8 108.8L1186.2 130.2L1188.5 132.2L1193.0 132.9ZM1192.7 152.2L1190.5 149.3L1197.1 141.8L1200.0 142.1L1205.2 149.9L1201.6 153.6ZM1203.5 159.0L1202.8 154.4L1206.4 150.7L1206.7 150.7L1211.5 152.7L1211.1 159.3ZM1245.8 169.2L1247.1 159.3L1252.1 158.1L1252.9 170.4ZM1247.9 235.1L1245.3 225.8L1239.5 224.0L1238.3 224.8L1238.1 234.2L1245.6 235.9ZM1200.1 286.5L1200.1 286.5L1191.6 287.4L1191.2 297.1L1201.6 296.7L1202.0 296.2ZM1203.6 267.1L1200.9 266.2L1192.7 268.8L1192.0 270.8L1200.1 282.1L1203.7 276.1ZM1214.1 225.1L1214.4 228.9L1217.3 233.1L1219.9 234.5L1223.7 234.4L1226.5 226.6L1220.1 222.3ZM1220.6 236.1L1218.5 243.8L1220.3 246.8L1230.1 245.8L1230.7 245.0L1229.8 239.2L1224.4 236.0ZM1228.0 226.7L1231.3 223.6L1236.8 224.8L1236.7 234.3L1230.7 237.7L1225.3 234.5ZM1221.0 220.9L1225.0 214.7L1225.9 214.0L1227.8 215.4L1230.6 222.1L1227.4 225.2ZM1216.4 234.6L1204.8 243.7L1204.8 243.7L1212.6 245.8L1216.9 243.7L1219.0 236.1ZM1213.0 229.6L1203.6 232.7L1204.4 242.8L1216.0 233.8ZM1346.1 171.3L1348.9 157.8L1339.6 161.6L1344.2 171.1ZM1347.2 171.3L1349.8 172.5L1366.7 167.2L1350.7 156.9L1350.0 157.8ZM1339.2 237.3L1350.4 233.6L1349.4 227.9L1338.0 227.7L1338.2 235.2ZM1339.7 238.2L1340.4 243.4L1350.9 243.9L1352.1 235.9L1350.9 234.5ZM1338.0 238.5L1338.7 243.7L1338.1 244.6L1328.0 247.4L1325.4 242.4L1329.2 237.5L1337.0 236.4ZM1169.3 317.8L1176.1 314.0L1172.4 306.2L1166.2 309.5L1166.9 316.0ZM1173.6 305.7L1174.9 302.4L1186.0 308.7L1186.2 309.3L1180.2 313.9L1177.3 313.5ZM1172.0 304.9L1173.4 301.6L1173.4 301.5L1168.4 297.0L1159.7 300.6L1160.7 304.7L1165.9 308.2ZM1165.8 315.9L1159.0 317.2L1158.6 316.9L1159.4 306.6L1159.9 305.9L1165.1 309.4ZM1156.0 238.5L1161.5 231.8L1167.3 239.6L1162.0 242.5L1156.8 241.4ZM1156.2 242.7L1147.3 252.3L1159.8 255.2L1161.4 243.8ZM1189.4 232.9L1188.8 233.7L1179.4 229.5L1178.9 225.3L1179.9 222.6L1190.5 225.7ZM1200.4 232.1L1202.1 233.1L1202.8 243.3L1202.8 243.4L1201.4 244.6L1194.9 241.7L1190.6 237.2L1190.5 235.0L1191.1 234.2ZM1184.0 253.1L1175.6 258.7L1183.0 262.9L1187.6 262.6L1186.8 255.3L1185.9 254.3ZM1182.0 263.7L1175.4 268.0L1174.4 266.9L1173.0 259.8L1174.6 259.4ZM1183.1 264.5L1176.5 268.8L1177.1 271.4L1181.7 274.5L1185.3 274.6L1190.1 270.5L1190.8 268.5L1187.6 264.2ZM1188.1 255.7L1199.1 253.4L1200.2 264.8L1192.1 267.4L1188.9 263.0ZM1187.4 253.2L1194.7 243.2L1201.2 246.1L1201.0 249.3L1199.4 251.9L1188.3 254.2ZM1339.6 304.8L1347.9 312.6L1348.0 314.1L1346.4 316.8L1341.3 318.0L1338.2 306.0ZM1341.2 299.2L1347.5 296.7L1351.4 298.7L1348.1 311.3L1339.8 303.5ZM1335.2 295.0L1333.0 291.2L1336.3 288.0L1343.5 288.2L1346.6 294.8L1346.8 295.5L1340.5 298.1ZM1334.2 275.8L1324.7 284.3L1319.8 282.3L1329.0 273.3L1334.2 275.8ZM1334.5 276.8L1335.1 287.1L1331.8 290.3L1328.7 289.7L1325.1 285.3ZM1335.6 276.0L1336.1 286.3L1343.4 286.5L1345.4 280.3L1337.8 275.0L1335.6 276.0ZM1329.1 307.4L1337.0 304.7L1338.4 303.6L1339.8 299.3L1334.4 296.2L1328.8 303.9ZM1324.0 296.9L1328.5 291.0L1331.5 291.5L1333.7 295.3L1328.1 303.0ZM1329.0 308.8L1337.0 306.1L1340.0 318.2L1337.0 319.6L1332.3 318.3L1328.5 309.8ZM1319.5 298.6L1319.4 308.9L1327.2 308.4L1327.7 307.5L1327.3 304.0L1323.3 297.9L1320.0 298.1ZM1272.8 266.3L1273.0 258.0L1269.6 254.5L1263.7 262.8ZM1278.0 249.8L1281.1 251.2L1280.9 255.6L1273.8 257.0L1270.4 253.6L1270.3 252.2ZM1221.8 320.9L1220.3 322.8L1213.3 321.8L1210.4 316.7L1212.1 312.2L1217.5 310.2ZM1282.6 133.4L1277.0 122.9L1271.9 130.0L1274.7 138.8L1277.5 139.3ZM1270.7 157.5L1257.1 152.3L1257.1 151.8L1260.3 147.9L1267.6 146.9L1271.3 154.5ZM1258.5 138.1L1261.5 135.7L1262.7 130.2L1254.5 126.2L1252.7 129.5L1257.1 137.5ZM1262.8 135.9L1271.5 140.1L1273.5 139.0L1270.8 130.2L1264.3 130.2L1264.0 130.4ZM1259.3 139.3L1260.3 146.6L1267.7 145.6L1271.0 141.1L1262.4 136.8ZM1245.4 140.6L1256.0 137.8L1251.6 129.9L1245.0 134.1ZM1245.5 142.8L1255.7 150.7L1258.9 146.8L1257.9 139.5L1256.5 138.8L1245.9 141.6ZM1235.3 159.0L1232.2 163.6L1222.9 154.1L1222.5 151.2L1223.7 148.9L1228.3 149.7ZM1240.3 157.8L1245.8 159.3L1244.5 169.3L1243.5 169.7L1234.9 169.4L1233.6 166.7L1233.7 164.9L1236.8 160.3ZM1191.7 158.5L1197.4 166.1L1191.2 167.8L1190.9 159.3ZM1190.3 159.7L1184.6 164.5L1186.5 169.7L1190.5 168.2ZM1192.4 158.1L1192.7 153.8L1201.7 155.1L1202.3 159.7L1200.4 166.2L1198.1 165.6ZM1190.9 157.6L1191.2 153.2L1189.0 150.3L1186.5 149.9L1181.1 153.0L1181.0 160.6L1184.5 163.2L1190.1 158.4ZM1238.7 183.0L1244.2 178.6L1243.3 171.3L1234.7 171.0L1233.2 178.4L1233.6 179.7ZM1227.6 188.9L1233.3 181.0L1238.5 184.4L1241.5 189.2L1239.9 193.7ZM1212.7 187.4L1217.7 179.9L1223.3 190.6L1221.3 194.3L1213.6 191.6ZM1222.0 176.8L1232.0 177.8L1233.5 170.4L1232.2 167.7L1225.1 168.1ZM1218.6 178.6L1218.6 179.0L1224.2 189.7L1226.1 188.2L1231.8 180.3L1231.5 179.1L1221.4 178.0ZM1259.8 275.4L1253.9 269.2L1261.6 265.4L1260.8 274.5ZM1253.4 268.4L1248.1 267.7L1247.5 265.6L1258.5 260.7L1261.6 263.4L1261.1 264.6ZM1261.9 274.1L1270.7 274.3L1272.3 272.6L1272.6 267.4L1272.5 267.4L1263.4 263.8L1263.3 263.9L1262.7 265.1ZM1242.4 247.1L1245.0 237.5L1237.6 235.8L1231.6 239.3L1232.5 245.1L1240.2 248.8ZM1218.1 290.2L1207.6 296.6L1212.6 300.1L1221.7 293.9ZM1206.7 297.7L1203.4 297.8L1203.0 298.3L1202.7 304.6L1204.9 307.0L1211.1 310.5L1216.5 308.4L1216.6 308.3L1211.8 301.2ZM1212.6 257.4L1202.3 250.6L1200.7 253.2L1201.7 264.6L1204.5 265.4L1211.6 264.5ZM1220.0 253.3L1220.2 247.9L1230.0 247.0L1226.8 254.8ZM1214.8 255.3L1213.2 246.8L1217.5 244.8L1219.2 247.8L1219.0 253.2ZM1213.7 255.3L1212.0 246.9L1204.2 244.9L1202.8 246.1L1202.6 249.3L1213.0 256.1ZM1211.9 283.5L1201.1 285.3L1201.0 285.2L1200.9 283.4L1204.5 277.5L1210.6 278.2ZM1212.5 284.5L1201.7 286.3L1203.6 295.9L1206.9 295.9L1217.4 289.5L1216.8 286.7ZM1346.3 201.8L1346.6 194.8L1348.6 192.6L1363.8 198.5L1348.5 203.1ZM1289.6 201.7L1280.5 195.4L1277.6 203.1L1283.4 208.0ZM1319.8 239.4L1324.2 241.9L1328.0 237.0L1324.5 232.8ZM1348.6 262.3L1349.1 259.0L1340.4 251.9L1337.7 257.3L1337.5 262.0L1341.2 265.6L1347.8 263.4ZM1336.3 256.1L1328.3 253.5L1327.0 250.3L1327.9 248.6L1338.0 245.8L1339.1 250.7ZM1349.5 257.5L1351.6 255.0L1352.1 246.2L1350.9 245.2L1340.4 244.7L1339.8 245.6L1340.9 250.5ZM1336.1 261.8L1328.7 261.8L1328.3 254.5L1336.3 257.1ZM1336.2 263.1L1328.7 263.0L1324.9 266.7L1329.6 272.0L1334.8 274.5L1337.0 273.5L1339.9 266.7ZM1348.1 265.0L1353.6 277.4L1346.3 279.3L1338.7 274.0L1341.5 267.2ZM1176.1 233.4L1181.7 243.4L1180.2 245.7L1173.4 244.7L1170.3 240.0L1176.0 233.5ZM1181.5 246.5L1184.3 251.6L1186.2 252.7L1193.5 242.7L1189.2 238.2L1183.0 244.2ZM1177.0 232.8L1179.2 230.5L1188.6 234.6L1188.8 236.9L1182.6 242.8ZM1173.3 246.4L1168.7 256.1L1172.9 258.4L1174.5 258.1L1182.9 252.5L1180.1 247.4ZM1168.9 241.1L1168.0 240.9L1162.7 243.8L1161.1 255.2L1163.0 256.5L1167.5 255.5L1172.1 245.7ZM1174.7 232.5L1164.7 227.8L1161.9 229.0L1162.2 231.0L1168.0 238.9L1169.0 239.1ZM1175.8 231.8L1178.0 229.5L1177.5 225.3L1168.9 224.4L1165.6 227.2L1175.6 231.9ZM1213.1 223.0L1213.8 223.9L1219.8 221.0L1223.8 214.9L1214.4 215.6ZM1280.0 287.5L1282.0 285.1L1280.7 278.1L1273.5 274.4L1271.9 276.0L1271.1 286.1L1279.1 287.7ZM1314.5 313.9L1303.7 317.1L1302.9 316.4L1303.2 314.6L1309.7 306.0L1315.6 310.9ZM1309.2 304.8L1307.5 301.0L1305.0 299.0L1303.8 299.3L1300.7 304.4L1302.8 313.3ZM1301.6 316.2L1294.5 315.8L1293.0 308.5L1299.9 305.5L1301.9 314.4ZM1314.9 315.2L1316.1 319.1L1310.0 339.4L1304.1 318.4ZM1316.4 309.8L1318.2 309.1L1318.3 298.8L1308.7 301.1L1310.5 304.9ZM1316.4 314.1L1317.6 318.0L1327.9 320.6L1330.8 318.4L1327.0 309.9L1319.2 310.3L1317.5 311.1ZM1311.0 242.5L1307.1 245.9L1309.0 252.5L1317.4 250.9L1314.3 242.4ZM1315.5 242.3L1319.0 240.4L1319.4 240.4L1323.8 242.9L1326.4 247.9L1325.5 249.7L1320.6 251.4L1318.6 250.7ZM1311.3 241.4L1309.8 236.0L1316.4 234.6L1318.1 239.4L1314.6 241.3ZM1318.4 265.4L1320.9 253.2L1325.7 251.5L1327.1 254.6L1327.5 261.9L1323.6 265.5L1318.4 265.4ZM1288.7 236.3L1294.9 233.7L1299.2 237.4L1298.0 242.9L1292.9 244.9L1290.9 244.1L1287.5 238.1ZM1299.5 242.7L1306.3 244.7L1310.2 241.3L1308.6 235.9L1306.2 231.1L1305.4 231.2L1300.8 237.1ZM1295.8 232.6L1297.7 226.0L1304.6 230.4L1300.1 236.3ZM1257.0 250.5L1256.9 250.6L1256.6 252.2L1259.4 259.3L1262.6 262.1L1262.7 262.1L1268.6 253.8L1268.5 252.4L1266.8 250.4ZM1255.4 240.8L1252.0 237.0L1249.1 236.7L1246.7 237.6L1244.1 247.2L1255.5 249.0L1255.5 248.9ZM1269.8 242.2L1276.7 245.1L1278.7 235.9L1276.6 234.3L1269.2 237.8ZM1269.6 243.4L1268.1 249.5L1269.8 251.5L1277.5 249.1L1276.4 246.2ZM1279.8 236.6L1286.1 238.7L1289.5 244.7L1281.9 250.0L1278.8 248.6L1277.7 245.7ZM1268.5 242.7L1267.1 248.9L1257.2 248.9L1257.1 240.9L1267.7 238.2L1267.9 238.3ZM1247.6 320.3L1238.0 336.5L1233.9 320.3L1235.2 318.4L1244.7 318.6ZM1239.9 285.7L1236.9 285.3L1234.1 280.5L1236.8 275.0L1245.4 272.8L1247.0 277.5ZM1222.9 304.6L1218.1 307.9L1213.3 300.8L1222.4 294.6L1222.4 294.6ZM1232.1 308.7L1233.4 317.1L1232.1 319.0L1223.1 320.3L1218.8 309.6L1218.9 309.5L1223.7 306.2ZM1291.5 128.9L1279.4 114.3L1278.0 122.0L1283.6 132.5L1290.3 132.0ZM1262.7 169.7L1273.3 170.1L1272.6 161.0L1271.5 160.1L1263.7 165.4ZM1263.1 164.4L1256.0 155.6L1257.0 153.1L1270.6 158.3L1270.8 159.2ZM1252.7 179.1L1245.7 178.1L1244.8 170.9L1245.8 170.5L1252.9 171.6L1254.4 172.9ZM1260.5 170.7L1261.2 169.8L1262.3 165.5L1255.2 156.7L1253.1 158.4L1253.9 170.7L1255.5 171.9ZM1266.3 178.3L1274.3 178.6L1275.2 173.8L1273.3 171.3L1262.7 170.9L1262.1 171.7ZM1263.3 185.6L1272.2 190.5L1275.8 189.3L1275.3 181.4L1274.6 179.9L1266.6 179.6ZM1326.4 133.1L1325.4 130.2L1328.1 128.4L1334.1 127.2L1337.4 130.2L1334.8 139.7L1333.4 140.0ZM1315.3 137.0L1320.2 129.7L1321.5 129.5L1324.1 130.4L1325.0 133.3L1320.7 142.2ZM1228.6 122.7L1228.3 123.1L1225.2 133.1L1228.6 136.0L1229.8 135.7L1233.4 131.3ZM1239.8 148.6L1243.4 143.0L1235.4 141.1L1232.8 147.7ZM1243.7 142.0L1243.7 142.0L1244.1 140.8L1243.8 134.3L1240.1 131.6L1234.8 132.2L1231.1 136.6L1235.6 140.1ZM1231.6 147.6L1228.4 148.3L1223.8 147.6L1223.7 146.9L1228.5 137.8L1229.7 137.4L1234.2 140.9ZM1241.2 149.4L1241.5 156.1L1247.0 157.7L1251.9 156.5L1254.0 154.8L1255.1 152.3L1255.1 151.8L1244.9 143.9L1244.8 143.9ZM1239.5 149.5L1239.8 156.2L1236.4 158.8L1229.4 149.5L1232.5 148.7ZM1231.5 205.1L1227.9 198.8L1222.4 196.5L1220.4 204.0L1225.7 210.8ZM1228.3 197.6L1238.8 195.6L1238.9 194.6L1226.7 189.8L1224.8 191.3L1222.7 195.0L1222.9 195.4ZM1219.0 203.5L1215.4 205.1L1208.7 203.3L1207.1 196.2L1213.3 192.9L1220.9 195.6L1221.1 196.0ZM1224.9 211.8L1225.1 213.0L1224.2 213.7L1214.7 214.5L1214.0 212.7L1216.0 206.7L1219.7 205.1ZM1206.0 183.3L1211.3 187.6L1212.2 191.8L1206.1 195.1L1205.3 194.9L1201.0 188.3ZM1212.9 171.8L1221.7 167.0L1218.5 161.7L1213.6 163.2L1211.0 171.0ZM1223.0 166.5L1224.6 166.9L1231.8 166.6L1232.0 164.8L1222.7 155.3L1219.8 161.3ZM1213.8 161.9L1212.3 159.6L1212.7 153.0L1221.1 151.5L1221.5 154.4L1218.7 160.4ZM1213.5 172.5L1218.0 177.3L1220.8 176.8L1223.9 168.1L1222.2 167.7ZM1209.9 171.0L1205.1 171.8L1204.9 171.7L1201.6 167.1L1203.5 160.6L1211.1 160.9L1212.5 163.2ZM1212.4 173.2L1216.9 178.0L1216.9 178.4L1211.9 186.0L1206.6 181.7L1205.7 173.2L1210.5 172.4ZM1287.8 179.9L1276.7 181.5L1277.2 189.4L1279.2 190.6L1282.0 189.3L1289.2 181.1ZM1284.8 170.3L1276.7 174.1L1275.8 178.9L1276.5 180.4L1287.6 178.7ZM1286.1 166.7L1286.0 164.3L1284.4 162.1L1274.2 161.2L1274.9 170.3L1276.8 172.8L1284.9 169.0ZM1306.8 159.9L1313.5 157.1L1314.9 151.3L1308.0 147.3L1303.0 157.0ZM1241.2 205.3L1233.0 204.9L1229.4 198.6L1239.9 196.6L1242.5 203.6ZM1239.6 211.9L1228.6 214.3L1226.7 213.0L1226.6 211.7L1232.4 206.1L1240.6 206.5ZM1240.1 212.9L1229.1 215.4L1231.9 222.0L1237.5 223.3L1238.7 222.5L1240.8 214.9ZM1254.6 187.0L1258.1 187.7L1262.5 199.8L1254.0 201.1L1252.8 188.6ZM1251.4 189.1L1242.8 190.4L1241.2 194.9L1241.1 195.9L1243.7 203.0L1250.8 203.1L1252.7 201.6ZM1259.1 187.8L1262.4 186.7L1271.2 191.6L1264.5 200.2L1263.5 199.9ZM1254.9 185.4L1253.9 180.0L1255.6 173.7L1260.7 172.5L1264.9 179.1L1261.7 185.1L1258.3 186.1ZM1253.5 185.9L1252.5 180.5L1245.5 179.5L1240.0 184.0L1243.0 188.8L1251.6 187.5ZM1266.3 201.7L1265.7 200.7L1272.4 192.2L1276.1 191.0L1278.1 192.2L1279.3 194.8L1276.4 202.5L1272.2 204.2ZM1240.8 252.0L1246.9 257.9L1245.6 264.4L1236.6 261.5ZM1248.0 258.0L1255.2 252.9L1258.0 260.0L1247.0 265.0L1246.7 264.5ZM1241.4 251.0L1241.3 249.9L1243.6 248.3L1254.9 250.2L1254.7 251.7L1247.6 256.9ZM1235.4 260.9L1235.4 260.9L1239.7 251.3L1239.6 250.2L1231.9 246.5L1231.3 247.3L1228.1 255.2L1228.9 257.2ZM1236.3 262.6L1236.3 262.6L1245.3 265.4L1245.7 265.9L1246.2 268.0L1245.5 271.2L1236.9 273.3L1234.3 267.4ZM1222.0 279.1L1215.2 270.8L1214.6 267.0L1221.3 266.9L1225.3 270.5L1225.5 277.5ZM1221.0 265.4L1226.9 258.0L1226.1 256.0L1219.3 254.5L1215.1 256.6L1214.4 257.4L1213.3 264.5L1214.4 265.4ZM1213.8 270.6L1211.3 276.7L1205.2 275.9L1205.0 266.9L1212.2 265.9L1213.3 266.8ZM1221.3 280.1L1217.6 285.4L1213.3 283.2L1212.0 277.9L1214.5 271.8ZM1226.4 269.5L1232.8 267.1L1234.8 262.3L1228.2 258.6L1222.3 266.0ZM1226.9 277.8L1232.9 279.8L1235.6 274.3L1233.1 268.3L1226.6 270.7ZM1327.9 183.7L1323.6 172.4L1329.1 170.7L1336.0 175.5L1334.4 181.6ZM1338.0 184.3L1347.3 185.3L1349.2 182.5L1348.5 174.3L1345.9 173.1L1344.0 172.9L1337.7 175.7L1336.1 181.9ZM1338.0 192.5L1345.7 193.8L1347.7 191.5L1347.3 186.8L1338.0 185.8ZM1326.9 184.3L1322.7 173.0L1320.8 172.8L1318.0 184.5L1323.0 186.4L1325.0 186.3ZM1290.0 226.5L1295.8 223.5L1295.8 219.0L1293.9 217.5L1288.3 217.1L1283.7 223.1ZM1297.2 219.3L1302.1 217.0L1302.6 217.1L1308.4 227.2L1305.8 229.3L1304.9 229.3L1298.0 225.0L1297.2 223.8ZM1290.3 227.5L1288.7 234.9L1295.0 232.3L1296.9 225.7L1296.0 224.6ZM1293.6 216.0L1292.9 202.5L1290.4 202.7L1284.2 208.9L1283.9 210.4L1288.0 215.5ZM1294.8 216.0L1294.0 202.5L1296.4 201.1L1302.7 204.9L1301.5 215.2L1296.7 217.5ZM1314.5 224.7L1309.4 226.9L1303.7 216.8L1313.9 216.4ZM1315.5 226.3L1316.2 233.5L1309.5 234.9L1307.1 230.1L1309.7 228.0L1314.8 225.9ZM1323.8 227.6L1323.9 232.1L1319.3 238.7L1318.8 238.7L1317.2 233.9L1316.5 226.7ZM1325.3 227.2L1325.4 231.7L1328.9 235.9L1336.7 234.9L1336.4 227.3L1335.9 226.5L1328.6 225.5ZM1337.7 219.4L1335.9 225.1L1328.6 224.0L1325.7 212.8L1328.9 211.6ZM1339.2 219.9L1337.5 225.6L1338.0 226.4L1349.4 226.6L1349.7 226.2L1346.3 216.1L1341.9 216.9ZM1318.6 209.5L1320.5 200.4L1318.5 198.2L1313.1 196.9L1309.1 203.8L1316.7 210.2ZM1318.5 196.6L1322.2 187.7L1317.1 185.8L1315.1 186.2L1312.1 192.6L1313.1 195.2ZM1315.7 211.3L1313.6 215.1L1303.4 215.5L1302.8 215.4L1304.0 205.1L1308.1 204.9ZM1319.1 211.6L1324.2 212.9L1327.1 224.1L1323.8 225.8L1316.5 224.9L1315.8 224.5L1315.1 216.1L1317.2 212.3ZM1191.2 223.9L1190.7 224.7L1180.0 221.6L1180.3 218.9L1186.2 214.1ZM1185.3 212.8L1182.1 206.5L1178.0 203.8L1170.4 206.9L1170.3 211.5L1179.4 217.5L1185.3 212.8ZM1199.3 221.8L1200.1 230.6L1190.8 232.8L1191.9 225.5L1192.4 224.7ZM1202.0 219.8L1211.7 223.8L1212.4 224.7L1212.7 228.4L1203.2 231.5L1201.6 230.5L1200.8 221.6ZM1195.4 201.1L1201.3 210.2L1201.2 211.4L1200.0 213.4L1190.0 211.9L1194.9 201.0ZM1201.3 214.5L1202.1 218.5L1211.8 222.5L1213.1 215.1L1212.4 213.3L1202.5 212.4ZM1202.7 210.3L1207.8 204.6L1214.5 206.5L1212.5 212.4L1202.6 211.5ZM1196.1 200.2L1204.8 196.3L1205.6 196.5L1207.2 203.6L1202.1 209.3ZM1189.6 213.0L1187.2 213.6L1187.2 213.6L1192.2 223.3L1199.2 220.4L1200.4 218.6L1199.5 214.5ZM1193.9 200.7L1191.7 199.1L1183.4 205.9L1186.6 212.2L1189.0 211.6ZM1278.0 310.1L1289.3 306.2L1288.4 299.6L1285.3 298.6L1277.7 304.9L1276.7 307.4L1277.4 309.9ZM1290.1 299.2L1294.3 296.8L1302.6 299.1L1299.5 304.2L1292.6 307.2L1291.0 305.8ZM1286.2 296.7L1281.5 288.6L1283.5 286.3L1292.5 285.2L1292.6 285.4L1293.4 295.3L1289.2 297.7ZM1277.4 303.6L1275.9 297.2L1279.5 289.4L1280.4 289.2L1285.0 297.3ZM1289.2 316.1L1278.8 312.0L1282.8 319.7ZM1289.8 315.6L1292.9 316.1L1293.2 315.8L1291.7 308.5L1290.1 307.2L1278.8 311.0L1279.4 311.6ZM1289.8 317.0L1292.8 317.5L1285.6 337.1L1283.4 320.6ZM1306.0 258.2L1307.7 253.0L1305.7 246.4L1299.0 244.4L1294.0 246.3L1294.6 249.0L1301.8 257.5ZM1309.5 262.9L1317.2 265.2L1319.6 253.0L1317.6 252.3L1309.2 253.9L1307.6 259.1ZM1306.0 291.8L1304.5 297.6L1303.4 297.9L1295.1 295.6L1294.3 285.7L1303.7 288.6ZM1314.6 288.8L1318.5 297.1L1318.0 297.6L1308.4 299.9L1305.9 297.9L1307.5 292.2ZM1318.6 283.7L1318.8 283.7L1323.8 285.7L1327.4 290.2L1323.0 296.1L1319.6 296.2L1315.7 287.9ZM1316.8 279.1L1318.1 267.4L1323.3 267.5L1328.0 272.8L1318.8 281.9L1318.5 281.9ZM1262.9 305.6L1265.6 314.5L1260.1 316.2L1257.1 314.9ZM1264.5 302.1L1275.2 307.9L1275.8 310.4L1272.3 314.3L1266.6 314.0L1263.9 305.1ZM1254.9 279.6L1248.6 276.8L1247.0 272.2L1247.7 268.9L1253.1 269.7L1258.9 275.8L1257.3 278.6ZM1223.5 292.8L1223.2 292.9L1223.1 292.8L1219.5 289.1L1218.9 286.4L1222.6 281.0L1226.2 279.4L1232.2 281.5L1235.1 286.3L1233.0 288.6ZM1300.8 140.6L1294.3 150.1L1295.5 150.7L1306.2 145.0L1305.5 142.3L1304.4 141.0ZM1306.3 145.8L1307.1 146.9L1302.0 156.6L1298.9 156.9L1295.6 151.5ZM1307.0 142.3L1314.3 138.5L1319.7 143.6L1319.2 148.9L1315.4 150.1L1308.5 146.0L1307.8 145.0ZM1305.5 139.6L1306.5 130.1L1309.1 127.5L1318.8 129.8L1313.9 137.1L1306.6 140.9ZM1300.4 139.2L1294.1 137.5L1292.0 133.0L1293.2 129.9L1295.9 128.3L1304.9 130.1L1303.9 139.5ZM1290.0 149.7L1289.8 143.5L1279.2 142.0L1281.0 148.8L1286.1 152.1ZM1291.1 149.3L1293.3 150.0L1299.9 140.5L1293.6 138.8L1290.9 143.1ZM1279.3 140.8L1278.7 140.0L1283.7 134.1L1290.5 133.6L1292.6 138.0L1289.9 142.3ZM1279.7 148.5L1272.7 153.5L1269.0 146.0L1272.4 141.4L1274.4 140.3L1277.2 140.9L1277.9 141.7ZM1285.1 153.3L1283.9 160.8L1273.7 159.9L1272.6 159.0L1272.4 158.1L1273.0 155.1L1280.0 150.1ZM1290.8 150.9L1293.0 151.5L1294.2 152.1L1297.5 157.5L1296.1 159.7L1287.3 162.9L1285.8 160.7L1286.9 153.2ZM1331.1 159.7L1327.9 157.8L1323.5 150.7L1331.2 147.2L1335.7 154.0L1334.6 158.4ZM1322.8 149.3L1320.8 148.7L1321.3 143.5L1325.6 134.6L1332.7 141.4L1330.5 145.8ZM1336.5 152.8L1343.7 148.6L1338.5 141.8L1335.5 141.4L1334.1 141.6L1332.0 146.0ZM1326.5 157.8L1317.7 162.9L1314.8 157.2L1316.2 151.4L1320.0 150.2L1322.0 150.8ZM1330.2 161.3L1328.3 169.4L1322.8 171.1L1320.9 170.9L1318.3 169.3L1318.2 164.4L1327.0 159.3ZM1336.2 158.4L1339.5 160.2L1348.8 156.4L1349.5 155.6L1348.8 150.8L1344.6 149.8L1337.4 154.1ZM1331.8 161.3L1329.8 169.4L1336.7 174.1L1343.1 171.2L1338.5 161.7L1335.2 159.9ZM1193.7 180.0L1194.8 186.8L1189.4 191.6L1182.9 189.6L1188.6 178.1ZM1195.2 179.4L1204.1 173.5L1204.3 173.6L1205.2 182.1L1200.2 187.0L1196.3 186.1ZM1190.2 192.8L1192.6 197.6L1194.8 199.2L1195.2 199.3L1203.9 195.5L1199.6 188.9L1195.6 188.0ZM1187.7 177.6L1185.2 173.8L1179.7 175.2L1181.8 189.1L1182.1 189.1ZM1188.5 192.9L1191.0 197.7L1182.7 204.5L1178.6 201.8L1180.7 191.4L1180.8 191.3L1181.8 191.0L1182.1 190.9ZM1194.2 178.3L1203.1 172.3L1199.9 167.8L1197.5 167.2L1191.3 169.0L1187.2 170.5L1186.5 172.6L1189.1 176.4ZM1306.5 168.5L1307.1 161.3L1313.8 158.5L1316.6 164.3L1316.7 169.2L1308.8 171.5ZM1300.2 166.9L1297.5 160.5L1298.9 158.2L1302.0 157.9L1305.8 160.8L1305.2 168.0ZM1299.1 167.4L1296.4 160.9L1287.5 164.2L1287.7 166.6L1295.1 169.8ZM1252.9 217.7L1242.2 213.8L1241.5 211.9L1242.4 206.4L1243.8 204.7L1250.9 204.8L1253.7 212.9ZM1263.4 209.9L1264.5 202.6L1263.9 201.7L1262.9 201.4L1254.4 202.7L1252.6 204.1L1255.4 212.2ZM1252.9 219.0L1242.2 215.1L1240.0 222.7L1245.9 224.5L1253.1 219.6ZM1258.5 224.7L1252.1 235.1L1249.2 234.8L1246.6 225.5L1253.8 220.7ZM1259.4 225.3L1253.0 235.7L1256.5 239.5L1267.1 236.9L1260.5 225.3ZM1337.9 206.5L1332.0 206.2L1330.5 198.3L1330.9 197.6L1334.8 196.4L1340.9 203.1ZM1330.6 196.0L1326.2 187.3L1328.2 185.4L1334.7 183.3L1336.6 185.7L1336.6 192.4L1334.5 194.9ZM1341.8 202.6L1345.0 201.8L1345.4 194.8L1337.7 193.5L1335.6 196.0ZM1338.1 207.9L1340.9 215.5L1338.3 218.5L1329.4 210.7L1332.2 207.6ZM1329.3 198.9L1321.7 200.8L1319.9 209.9L1325.0 211.2L1328.1 210.0L1330.9 206.9ZM1329.6 196.7L1325.2 188.0L1323.3 188.2L1319.6 197.1L1321.6 199.3L1329.2 197.4ZM1339.3 207.5L1342.1 215.1L1346.5 214.4L1349.1 212.6L1347.7 204.5L1345.5 203.2L1342.3 204.1ZM1308.7 277.3L1315.7 278.4L1317.0 266.8L1317.0 266.8L1309.4 264.5L1306.3 268.5ZM1308.5 279.0L1315.5 280.2L1317.2 283.0L1314.4 287.3L1307.3 290.7L1305.0 287.4L1306.1 280.4ZM1295.8 277.2L1293.7 284.1L1293.9 284.4L1303.4 287.2L1304.6 280.3ZM1234.5 300.6L1223.9 294.6L1223.6 294.7L1224.1 304.7L1232.4 307.1L1234.4 305.2ZM1234.9 299.9L1224.3 293.9L1233.8 289.8L1235.0 299.6ZM1266.2 286.1L1259.0 279.5L1260.5 276.6L1261.6 275.7L1270.4 275.9L1269.5 285.9L1267.8 286.8ZM1266.9 294.8L1274.9 296.7L1278.5 288.8L1270.4 287.2L1268.7 288.1ZM1264.0 300.1L1264.6 301.1L1275.2 306.8L1276.2 304.3L1274.7 298.0L1266.6 296.1ZM1302.2 190.4L1308.7 182.1L1306.0 177.9L1297.4 181.4L1296.5 182.3L1297.7 189.6L1298.3 191.0ZM1296.1 180.2L1294.9 171.0L1287.5 167.9L1286.3 170.2L1289.0 178.6L1290.4 179.9L1295.3 181.1ZM1296.4 189.7L1283.2 189.4L1290.4 181.2L1295.3 182.4ZM1306.2 176.3L1307.6 172.4L1305.2 169.4L1300.3 168.3L1296.3 170.7L1297.5 179.8ZM1296.9 192.3L1295.4 199.3L1293.0 200.6L1290.5 200.8L1281.4 194.5L1280.2 191.9L1283.0 190.6L1296.2 190.9ZM1303.3 190.8L1311.2 192.2L1314.2 185.8L1309.8 182.4ZM1307.7 176.9L1309.1 173.0L1317.0 170.7L1319.6 172.3L1316.8 184.0L1314.7 184.5L1310.3 181.1ZM1302.6 192.0L1310.5 193.5L1311.6 196.1L1307.6 203.0L1303.6 203.3L1297.3 199.5L1298.8 192.5ZM1274.0 214.8L1267.2 215.6L1264.0 222.6L1276.3 224.5L1276.5 224.2L1275.1 215.4ZM1265.6 215.5L1263.4 211.7L1255.4 214.0L1254.5 218.8L1254.7 219.4L1259.4 223.5L1260.5 223.5L1262.3 222.5ZM1275.9 225.9L1275.9 233.2L1268.5 236.6L1268.3 236.6L1261.8 225.0L1263.5 224.0ZM1273.6 213.4L1271.5 205.7L1265.7 203.2L1264.6 210.5L1266.7 214.3ZM1277.8 225.7L1282.5 224.3L1288.8 227.7L1287.2 235.1L1286.0 236.9L1279.7 234.8L1277.6 233.2L1277.6 225.9ZM1276.2 215.2L1282.9 211.6L1287.0 216.7L1282.4 222.7L1277.7 224.1ZM1274.7 213.4L1272.7 205.7L1276.9 204.1L1282.7 208.9L1282.4 210.5L1275.8 214.1ZM1294.5 262.4L1297.5 270.7L1294.7 274.0L1288.2 270.3L1286.0 263.9L1286.0 263.9L1290.1 261.8ZM1298.9 271.8L1304.9 269.1L1307.3 277.9L1305.0 279.2L1296.3 276.2L1296.0 275.0ZM1288.0 271.8L1282.4 277.6L1283.6 284.6L1292.6 283.6L1294.7 276.6L1294.5 275.5ZM1296.1 262.1L1302.0 259.2L1306.2 259.9L1308.1 263.6L1305.1 267.7L1299.1 270.3ZM1284.6 264.4L1274.2 267.7L1273.9 272.9L1281.2 276.6L1286.8 270.8ZM1284.4 263.4L1281.3 256.8L1274.1 258.2L1274.0 266.6L1274.0 266.6L1284.4 263.4ZM1289.7 260.1L1292.8 249.3L1292.2 246.6L1290.2 245.8L1282.7 251.2L1282.5 255.5L1285.6 262.1ZM1295.1 261.3L1301.0 258.4L1293.8 249.9L1290.6 260.7ZM1246.0 311.8L1246.0 317.6L1248.8 319.3L1249.0 319.3L1255.4 315.2L1252.0 307.3ZM1240.9 306.1L1235.8 306.5L1233.8 308.4L1235.1 316.8L1244.6 317.0L1244.7 311.3ZM1253.2 291.6L1255.2 298.4L1251.9 301.0L1247.2 300.5L1244.1 295.3L1243.6 290.0L1252.5 290.7ZM1251.7 302.3L1251.7 306.1L1245.8 310.5L1242.0 305.3L1246.9 301.8ZM1242.8 296.0L1236.0 300.3L1235.9 300.6L1235.8 305.2L1240.9 304.8L1245.9 301.3ZM1254.8 291.4L1265.8 287.7L1267.4 288.4L1265.6 295.1L1262.9 299.0L1256.8 298.2ZM1253.0 302.3L1253.1 306.1L1256.5 313.9L1256.7 314.0L1262.4 304.6L1263.0 301.6L1262.4 300.6L1256.2 299.7ZM1252.2 289.3L1254.2 280.9L1248.0 278.2L1240.9 286.4L1243.4 288.6ZM1242.7 294.7L1235.8 298.9L1234.7 289.2L1236.7 286.8L1239.7 287.2L1242.2 289.5ZM1254.2 290.3L1265.2 286.7L1257.9 280.1L1255.5 281.0L1253.5 289.4Z" fill="#dcdcdc" stroke="#555" stroke-width=".7"/><g fill="#ccffb3" stroke="#86c060" stroke-width=".6"><polygon points="1282.3,150.8 1305,154.6 1327.7,191.2 1335.3,229 1322.7,246.7 1312,232 1302.5,213.9 1287.3,168.5"/><polygon points="1252,150 1270,142 1284,158 1286,185 1277,204 1266,208 1258,196 1250,172"/><polygon points="1160,163 1166,161 1166.5,183 1160,185"/><polygon points="1167.5,166 1175,164 1176,180 1168,182"/><polygon points="1178,161 1185,159 1186,168 1179,169"/><polygon points="1176,196 1204,193 1203,209 1177,212"/><polygon points="1244,306 1252,304 1262,316 1262,319.2 1244,319.2"/><polygon points="1322,297 1332,294 1334,305 1324,308"/><polygon points="1306,228 1322,226 1336,232 1334,246 1318,250"/><polygon points="1340,200 1349.2,196 1349.2,216 1341,214"/><polygon points="1300,244 1312,236 1316,242 1304,252"/></g><path d="M1249 152Q1252 142 1262 145T1282 160Q1284 170 1276 178T1266 194Q1262 186 1263 174T1256 166Q1248 164 1249 152Z" fill="#66b34d" stroke="#2d7a1a" stroke-width=".9"/><path d="M1254 156Q1262 150 1270 158T1272 172M1258 160Q1266 160 1268 170T1266 186M1262 150Q1274 152 1278 164" fill="none" stroke="#2d7a1a" stroke-width="1.1"/><path d="M1219.6 128.9C1227.4 150 1238.2 185 1242.2 205S1248.6 250 1246.2 270S1242.2 305 1241.2 319.2" fill="none" stroke="#66aa22" stroke-width="7.4"/><path d="M1218 128.9C1225.8 150 1236.6 185 1240.6 205S1247 250 1244.6 270S1240.6 305 1239.6 319.2" fill="none" stroke="#4d88e0" stroke-width="6.8"/><path d="M1218 128.9C1225.8 150 1236.6 185 1240.6 205S1247 250 1244.6 270S1240.6 305 1239.6 319.2" fill="none" stroke="#8fd3f7" stroke-width="5.4"/><path d="M1226.8 160.6h6.8" stroke="#5577dd" stroke-width="1"/><path d="M1238.4 211.0h6.8" stroke="#5577dd" stroke-width="1"/><path d="M1242.4 241.6h6.8" stroke="#5577dd" stroke-width="1"/><path d="M1241.0 276.0h6.8" stroke="#5577dd" stroke-width="1"/><path d="M1238.0 298.0h6.8" stroke="#5577dd" stroke-width="1"/><path d="M1205 218Q1192 226 1188 246T1190 272" fill="none" stroke="#4466cc" stroke-width=".9"/><path d="M1192.6 306V318" stroke="#4466cc" stroke-width=".9"/></g><path d="M1177 123.5V324.5M1153.5 265.7H1356" stroke="#f03030" stroke-opacity=".75" stroke-width="1.5"/><rect x="1171.9" y="263.4" width="10.6" height="5.6" fill="#f7a0a0" stroke="#f00000" stroke-width="1.5"/><rect x="1153.5" y="307.5" width="17" height="17" fill="#fff" stroke="#c4c4c4"/><path d="M1157 311.6H1166.4V321" fill="none" stroke="#777" stroke-width="2.6"/></svg>
<div class="a " style="left:299px;top:118px;width:34px;height:39px;background:#fff;border-right:1px solid #c4c4c4;border-bottom:1px solid #c4c4c4;box-sizing:border-box"></div>
<svg class="a" style="left:314.3px;top:130.8px" width="9.4" height="13.4" viewBox="0 0 9.4 13.4"><path d="M7.9 1.5L2.14286 6.7L7.9 11.9" fill="none" stroke="#6a6a6a" stroke-width="3"/></svg>
<div class="a " style="left:339px;top:123px;width:115px;height:33.6px;background:rgba(255,255,255,.82);border:1px solid #c8c8c8;box-sizing:border-box"></div>
<span class="t " style="left:344.6px;top:131.0px;font-size:12px;line-height:16px;letter-spacing:-0.104px;color:#444;">Ich will ...</span>
<div class="a " style="left:396px;top:129.2px;width:40px;height:21.6px;background:#fff;border:1px solid #b4b4b4;box-sizing:border-box"></div>
<div class="a " style="left:305px;top:162px;width:28px;height:233px;background:#fff;border:1px solid #c8c8c8;box-sizing:border-box"></div>
<div class="a " style="left:306px;top:367px;width:26px;height:1px;background:#c8c8c8"></div>
<svg class="a" style="left:307px;top:164.9px" width="24" height="24" viewBox="-12 -12 24 24"><path d="M-3.9 -5A6.7 6.7 0 1 0 6.3 -2.6L7.3 -6.4" fill="none" stroke="#3b78b9" stroke-width="2.5" stroke-linejoin="round"/><path d="M1.2 -8.3H8.6V-6.2H4.4L3.9 -1.4L1.6 -1.2Z" fill="#3b78b9"/></svg>
<svg class="a" style="left:307px;top:189px" width="24" height="24" viewBox="-12 -12 24 24"><g fill="none" stroke="#3b78b9" stroke-width="1.2"><circle r="6.9"/><ellipse rx="3.7" ry="6.9"/><path d="M0 -6.9V6.9M-6 -3.4H6M-6 3.4H6"/></g></svg>
<svg class="a" style="left:307px;top:212px" width="24" height="24" viewBox="-12 -12 24 24"><circle cx="0.3" cy="-1.6" r="5.5" fill="#fff" stroke="#999" stroke-width="1.15"/><path d="M-3.9 3.3L-7 6.9" stroke="#5a5a5a" stroke-width="2.1" stroke-linecap="round"/><path d="M-2.4 -1.6H3M0.3 -4.3V1.1" stroke="#3b78b9" stroke-width="1.3"/></svg>
<svg class="a" style="left:307px;top:235.6px" width="24" height="24" viewBox="-12 -12 24 24"><circle cx="0.3" cy="-1.6" r="5.5" fill="#fff" stroke="#999" stroke-width="1.15"/><path d="M-3.9 3.3L-7 6.9" stroke="#5a5a5a" stroke-width="2.1" stroke-linecap="round"/><path d="M-2.4 -1.6H3" stroke="#3b78b9" stroke-width="1.3"/></svg>
<svg class="a" style="left:307px;top:259.2px" width="24" height="24" viewBox="-12 -12 24 24"><circle cx="0.3" cy="-1.6" r="5.5" fill="#fff" stroke="#999" stroke-width="1.15"/><path d="M-3.9 3.3L-7 6.9" stroke="#5a5a5a" stroke-width="2.1" stroke-linecap="round"/><path d="M2 -4.2V1L-1.8 -1.6Z" fill="#3b78b9"/></svg>
<svg class="a" style="left:307px;top:282.8px" width="24" height="24" viewBox="-12 -12 24 24"><circle cx="0.3" cy="-1.6" r="5.5" fill="#fff" stroke="#999" stroke-width="1.15"/><path d="M-3.9 3.3L-7 6.9" stroke="#5a5a5a" stroke-width="2.1" stroke-linecap="round"/><path d="M-1.2 -4.2V1L2.6 -1.6Z" fill="#3b78b9"/></svg>
<svg class="a" style="left:307px;top:311px" width="24" height="24" viewBox="-12 -12 24 24"><circle r="6.4" fill="none" stroke="#3b78b9" stroke-width="1.3"/><circle r="2.9" fill="#3b78b9"/></svg>
<svg class="a" style="left:307px;top:337px" width="24" height="24" viewBox="-12 -12 24 24"><rect x="-5" y="-4.6" width="10" height="9.2" fill="#c9c9c9"/><g stroke="#3b78b9" stroke-width="1.6" fill="none"><path d="M-7.6 -7.2L7.6 7.2M7.6 -7.2L-7.6 7.2"/><path d="M-8 -3.4V-7.6H-3.8M8 -3.4V-7.6H3.8M-8 3.4V7.6H-3.8M8 3.4V7.6H3.8"/></g></svg>
<svg class="a" style="left:312.5px;top:376.6px" width="13" height="8" viewBox="0 0 13 8"><path d="M1.5 6.5L6.5 2.14286L11.5 6.5" fill="none" stroke="#6a6a6a" stroke-width="3"/></svg>
<div class="a " style="left:890px;top:601px;width:436px;height:18px;background:rgba(255,255,255,.5)"></div>
<span class="t " style="left:893.2px;top:603.8px;font-size:12px;line-height:16px;letter-spacing:-0.116px;color:#808080;">Web Mercator (Auxiliary Sphere) Rechtswert: 1719740,50 / Hochwert: 5953136,00</span>
<div class="a " style="left:1325px;top:593px;width:32px;height:26px;background:#fff;border:1px solid #c8c8c8;box-sizing:border-box"></div>
<svg class="a" style="left:1334px;top:597.6px" width="17" height="17" viewBox="-8.5 -8.5 17 17"><circle r="7.2" fill="none" stroke="#666" stroke-width="1.8"/><path d="M0 -4.8V0.4H5" fill="none" stroke="#666" stroke-width="1.8"/></svg>
<div class="a " style="left:300px;top:618px;width:1056px;height:1px;background:#c4c4c4"></div>
<!-- gen_bottom -->
<span class="t " style="left:311.4px;top:624.4px;font-size:12px;line-height:16px;letter-spacing:-0.25px;transform:scaleX(0.8941);transform-origin:0 50%;color:#444;">OBJEKTÜBERSICHT</span>
<svg class="a" style="left:427.2px;top:625.5px" width="11.6" height="11.6" viewBox="-6 -6 12 12"><circle r="5.7" fill="#9a9a9a"/><path d="M-2.3 -2.3L2.3 2.3M2.3 -2.3L-2.3 2.3" stroke="#fff" stroke-width="1.7"/></svg>
<span class="t " style="left:455.6px;top:624.4px;font-size:12px;line-height:16px;letter-spacing:-0.25px;transform:scaleX(0.9193);transform-origin:0 50%;color:#0072c6;">THEMENERGEBNIS</span>
<svg class="a" style="left:571px;top:625.5px" width="11.6" height="11.6" viewBox="-6 -6 12 12"><circle r="5.7" fill="#9a9a9a"/><path d="M-2.3 -2.3L2.3 2.3M2.3 -2.3L-2.3 2.3" stroke="#fff" stroke-width="1.7"/></svg>
<div class="a " style="left:590.6px;top:640px;width:765.4px;height:1px;background:#c9c9c9"></div>
<div class="a " style="left:300px;top:640px;width:3px;height:1px;background:#c9c9c9"></div>
<span class="t " style="left:1156.4px;top:621.6px;font-size:12px;line-height:16px;letter-spacing:-0.030px;color:#444;">1 von 5 Objekten ausgewählt</span>
<svg class="a" style="left:1334.5px;top:626.6px" width="13.4" height="8.4" viewBox="0 0 13.4 8.4"><path d="M1.7 1.7L6.7 5.97143L11.7 1.7" fill="none" stroke="#666" stroke-width="3.4"/></svg>
<span class="t " style="left:310.0px;top:644.0px;font-size:12px;line-height:16px;letter-spacing:-0.098px;color:#444;">Ergebnisliste von Grundstücke</span>
<div class="a " style="left:1343px;top:641px;width:13px;height:23.4px;background:#f0f0f0"></div>
<div class="a " style="left:1343px;top:684.6px;width:13px;height:113.8px;background:#f0f0f0"></div>
<div class="a " style="left:1344.6px;top:718.6px;width:11.4px;height:45px;background:#c9c9c9"></div>
<svg class="a" style="left:1344.3px;top:702.3px" width="11" height="6.6" viewBox="0 0 11 6.6"><path d="M0.9 5.7L5.5 1.28571L10.1 5.7" fill="none" stroke="#444" stroke-width="1.8"/></svg>
<svg class="a" style="left:1344.3px;top:773.7px" width="11" height="6.6" viewBox="0 0 11 6.6"><path d="M0.9 0.9L5.5 5.31429L10.1 0.9" fill="none" stroke="#444" stroke-width="1.8"/></svg>
<div class="a " style="left:300px;top:661px;width:1043px;height:24px;background:#ededed;border-top:1px solid #dcdcdc;border-bottom:1px solid #d4d4d4;box-sizing:border-box"></div>
<div class="a " style="left:300px;top:706px;width:1043px;height:1px;background:#dcdcdc"></div>
<div class="a " style="left:300px;top:729px;width:1043px;height:1px;background:#dcdcdc"></div>
<div class="a " style="left:300px;top:752px;width:1043px;height:1px;background:#dcdcdc"></div>
<div class="a " style="left:300px;top:753px;width:1043px;height:22px;background:#bed6ed"></div>
<div class="a " style="left:300px;top:775px;width:1043px;height:1px;background:#dcdcdc"></div>
<div class="a " style="left:336px;top:661px;width:1px;height:137px;background:#d8d8d8"></div>
<div class="a " style="left:499px;top:661px;width:1px;height:137px;background:#d8d8d8"></div>
<div class="a " style="left:606px;top:661px;width:1px;height:137px;background:#d8d8d8"></div>
<div class="a " style="left:766px;top:661px;width:1px;height:137px;background:#d8d8d8"></div>
<div class="a " style="left:856px;top:661px;width:1px;height:137px;background:#d8d8d8"></div>
<div class="a " style="left:946px;top:661px;width:1px;height:137px;background:#d8d8d8"></div>
<div class="a " style="left:1071px;top:661px;width:1px;height:137px;background:#d8d8d8"></div>
<div class="a " style="left:1210px;top:661px;width:1px;height:137px;background:#d8d8d8"></div>
<div class="a " style="left:1310px;top:661px;width:1px;height:137px;background:#d8d8d8"></div>
<span class="t " style="left:361.6px;top:665.6px;font-size:12px;line-height:16px;letter-spacing:0.039px;color:#444;">Grundstücksnummer</span>
<span class="t " style="left:518.0px;top:665.6px;font-size:12px;line-height:16px;letter-spacing:0.108px;color:#444;">KG-Nummer</span>
<span class="t " style="left:660.6px;top:665.6px;font-size:12px;line-height:16px;letter-spacing:-0.291px;color:#444;">KG-Name</span>
<span class="t " style="left:794.6px;top:665.6px;font-size:12px;line-height:16px;letter-spacing:-0.25px;transform:scaleX(0.9722);transform-origin:0 50%;color:#444;">Fläche</span>
<span class="t " style="left:879.8px;top:665.6px;font-size:12px;line-height:16px;letter-spacing:0.156px;color:#444;">Umfang</span>
<span class="t " style="left:998.8px;top:665.6px;font-size:12px;line-height:16px;letter-spacing:0.25px;transform:scaleX(1.0080);transform-origin:0 50%;color:#444;">Typ</span>
<span class="t " style="left:1119.4px;top:665.6px;font-size:12px;line-height:16px;letter-spacing:-0.168px;color:#444;">KG-Gnr.</span>
<span class="t " style="left:1238.6px;top:665.6px;font-size:12px;line-height:16px;letter-spacing:0.206px;color:#444;">Qualität</span>
<svg class="a" style="left:481.8px;top:671.6px" width="7.4" height="4.2" viewBox="0 0 7.4 4.2"><path d="M0 4.2H7.4L3.7 0Z" fill="#222"/></svg>
<svg class="a" style="left:302.5px;top:687.4px" width="15" height="15" viewBox="-7.5 -7.5 15 15"><circle r="6.9" fill="#fff" stroke="#d04a2b" stroke-width="1.7"/><circle r="3.5" fill="none" stroke="#d04a2b" stroke-width="1.25"/><circle r="1.3" fill="#d04a2b"/></svg>
<svg class="a" style="left:321.85px;top:693.85px" width="7.3" height="4.3" viewBox="0 0 7.3 4.3"><path d="M0 0H7.3L3.65 4.3Z" fill="#222"/></svg>
<span class="t " style="left:338.8px;top:689.0px;font-size:12px;line-height:16px;letter-spacing:0.25px;transform:scaleX(1.0965);transform-origin:0 50%;color:#444;">3/2</span>
<span class="t " style="left:502.4px;top:689.0px;font-size:12px;line-height:16px;letter-spacing:-0.192px;color:#444;">63105</span>
<span class="t " style="left:609.0px;top:689.0px;font-size:12px;line-height:16px;letter-spacing:-0.267px;color:#444;">Gries</span>
<span class="t " style="left:798.0px;top:689.0px;font-size:12px;line-height:16px;letter-spacing:-0.171px;color:#444;">45,161397</span>
<span class="t " style="left:887.8px;top:689.0px;font-size:12px;line-height:16px;letter-spacing:-0.171px;color:#444;">31,959255</span>
<span class="t " style="left:1061.0px;top:689.0px;font-size:12px;line-height:16px;color:#444;">2</span>
<span class="t " style="left:1073.8px;top:689.0px;font-size:12px;line-height:16px;letter-spacing:0.163px;color:#444;">631053/2</span>
<span class="t " style="left:1213.4px;top:689.0px;font-size:12px;line-height:16px;letter-spacing:-0.25px;transform:scaleX(0.8762);transform-origin:0 50%;color:#444;">BEV</span>
<div class="a" style="left:1313px;top:689px;width:30px;height:16px;overflow:hidden"><span class="t " style="left:0.2px;top:0.0px;font-size:12px;line-height:16px;letter-spacing:-0.251px;color:#444;">01.04.2014</span></div>
<svg class="a" style="left:302.5px;top:710.4px" width="15" height="15" viewBox="-7.5 -7.5 15 15"><circle r="6.9" fill="#fff" stroke="#d04a2b" stroke-width="1.7"/><circle r="3.5" fill="none" stroke="#d04a2b" stroke-width="1.25"/><circle r="1.3" fill="#d04a2b"/></svg>
<svg class="a" style="left:321.85px;top:716.85px" width="7.3" height="4.3" viewBox="0 0 7.3 4.3"><path d="M0 0H7.3L3.65 4.3Z" fill="#222"/></svg>
<span class="t " style="left:338.8px;top:712.0px;font-size:12px;line-height:16px;letter-spacing:0.294px;color:#444;">402</span>
<span class="t " style="left:502.4px;top:712.0px;font-size:12px;line-height:16px;letter-spacing:-0.192px;color:#444;">63105</span>
<span class="t " style="left:609.0px;top:712.0px;font-size:12px;line-height:16px;letter-spacing:-0.267px;color:#444;">Gries</span>
<span class="t " style="left:791.6px;top:712.0px;font-size:12px;line-height:16px;letter-spacing:-0.174px;color:#444;">212,815413</span>
<span class="t " style="left:887.8px;top:712.0px;font-size:12px;line-height:16px;letter-spacing:-0.171px;color:#444;">58,535002</span>
<span class="t " style="left:1061.0px;top:712.0px;font-size:12px;line-height:16px;color:#444;">1</span>
<span class="t " style="left:1073.8px;top:712.0px;font-size:12px;line-height:16px;letter-spacing:-0.062px;color:#444;">63105402</span>
<span class="t " style="left:1213.4px;top:712.0px;font-size:12px;line-height:16px;letter-spacing:-0.25px;transform:scaleX(0.8762);transform-origin:0 50%;color:#444;">BEV</span>
<div class="a" style="left:1313px;top:712px;width:30px;height:16px;overflow:hidden"><span class="t " style="left:0.2px;top:0.0px;font-size:12px;line-height:16px;letter-spacing:-0.251px;color:#444;">01.04.2014</span></div>
<svg class="a" style="left:302.5px;top:733.4px" width="15" height="15" viewBox="-7.5 -7.5 15 15"><circle r="6.9" fill="#fff" stroke="#d04a2b" stroke-width="1.7"/><circle r="3.5" fill="none" stroke="#d04a2b" stroke-width="1.25"/><circle r="1.3" fill="#d04a2b"/></svg>
<svg class="a" style="left:321.85px;top:739.85px" width="7.3" height="4.3" viewBox="0 0 7.3 4.3"><path d="M0 0H7.3L3.65 4.3Z" fill="#222"/></svg>
<span class="t " style="left:338.8px;top:735.0px;font-size:12px;line-height:16px;letter-spacing:0.294px;color:#444;">403</span>
<span class="t " style="left:502.4px;top:735.0px;font-size:12px;line-height:16px;letter-spacing:-0.192px;color:#444;">63105</span>
<span class="t " style="left:609.0px;top:735.0px;font-size:12px;line-height:16px;letter-spacing:-0.267px;color:#444;">Gries</span>
<span class="t " style="left:791.6px;top:735.0px;font-size:12px;line-height:16px;letter-spacing:0.024px;color:#444;">666,051119</span>
<span class="t " style="left:881.4px;top:735.0px;font-size:12px;line-height:16px;letter-spacing:-0.174px;color:#444;">128,265462</span>
<span class="t " style="left:1061.0px;top:735.0px;font-size:12px;line-height:16px;color:#444;">1</span>
<span class="t " style="left:1073.8px;top:735.0px;font-size:12px;line-height:16px;letter-spacing:-0.062px;color:#444;">63105403</span>
<span class="t " style="left:1213.4px;top:735.0px;font-size:12px;line-height:16px;letter-spacing:-0.25px;transform:scaleX(0.8762);transform-origin:0 50%;color:#444;">BEV</span>
<div class="a" style="left:1313px;top:735px;width:30px;height:16px;overflow:hidden"><span class="t " style="left:0.2px;top:0.0px;font-size:12px;line-height:16px;letter-spacing:-0.251px;color:#444;">01.04.2014</span></div>
<svg class="a" style="left:302.5px;top:756.4px" width="15" height="15" viewBox="-7.5 -7.5 15 15"><circle r="6.9" fill="#fff" stroke="#d04a2b" stroke-width="1.7"/><circle r="3.5" fill="none" stroke="#d04a2b" stroke-width="1.25"/><circle r="1.3" fill="#d04a2b"/></svg>
<svg class="a" style="left:321.85px;top:762.85px" width="7.3" height="4.3" viewBox="0 0 7.3 4.3"><path d="M0 0H7.3L3.65 4.3Z" fill="#222"/></svg>
<span class="t " style="left:338.8px;top:758.0px;font-size:12px;line-height:16px;letter-spacing:0.294px;color:#444;">552</span>
<span class="t " style="left:502.4px;top:758.0px;font-size:12px;line-height:16px;letter-spacing:-0.192px;color:#444;">63105</span>
<span class="t " style="left:609.0px;top:758.0px;font-size:12px;line-height:16px;letter-spacing:-0.267px;color:#444;">Gries</span>
<span class="t " style="left:791.6px;top:758.0px;font-size:12px;line-height:16px;letter-spacing:-0.174px;color:#444;">659,776087</span>
<span class="t " style="left:881.4px;top:758.0px;font-size:12px;line-height:16px;letter-spacing:-0.075px;color:#444;">103,248116</span>
<span class="t " style="left:1061.0px;top:758.0px;font-size:12px;line-height:16px;color:#444;">1</span>
<span class="t " style="left:1073.8px;top:758.0px;font-size:12px;line-height:16px;letter-spacing:-0.062px;color:#444;">63105552</span>
<span class="t " style="left:1213.4px;top:758.0px;font-size:12px;line-height:16px;letter-spacing:-0.25px;transform:scaleX(0.8762);transform-origin:0 50%;color:#444;">BEV</span>
<div class="a" style="left:1313px;top:758px;width:30px;height:16px;overflow:hidden"><span class="t " style="left:0.2px;top:0.0px;font-size:12px;line-height:16px;letter-spacing:-0.251px;color:#444;">01.04.2014</span></div>
<svg class="a" style="left:302.5px;top:779.4px" width="15" height="15" viewBox="-7.5 -7.5 15 15"><circle r="6.9" fill="#fff" stroke="#d04a2b" stroke-width="1.7"/><circle r="3.5" fill="none" stroke="#d04a2b" stroke-width="1.25"/><circle r="1.3" fill="#d04a2b"/></svg>
<svg class="a" style="left:321.85px;top:785.85px" width="7.3" height="4.3" viewBox="0 0 7.3 4.3"><path d="M0 0H7.3L3.65 4.3Z" fill="#222"/></svg>
<span class="t " style="left:338.8px;top:781.0px;font-size:12px;line-height:16px;letter-spacing:0.25px;transform:scaleX(1.0242);transform-origin:0 50%;color:#444;">773/1</span>
<span class="t " style="left:502.4px;top:781.0px;font-size:12px;line-height:16px;letter-spacing:-0.192px;color:#444;">63105</span>
<span class="t " style="left:609.0px;top:781.0px;font-size:12px;line-height:16px;letter-spacing:-0.267px;color:#444;">Gries</span>
<span class="t " style="left:798.0px;top:781.0px;font-size:12px;line-height:16px;letter-spacing:-0.059px;color:#444;">410,71143</span>
<span class="t " style="left:887.8px;top:781.0px;font-size:12px;line-height:16px;letter-spacing:-0.171px;color:#444;">93,373095</span>
<span class="t " style="left:1061.0px;top:781.0px;font-size:12px;line-height:16px;color:#444;">2</span>
<span class="t " style="left:1073.8px;top:781.0px;font-size:12px;line-height:16px;letter-spacing:0.081px;color:#444;">63105773/1</span>
<span class="t " style="left:1213.4px;top:781.0px;font-size:12px;line-height:16px;letter-spacing:-0.25px;transform:scaleX(0.8762);transform-origin:0 50%;color:#444;">BEV</span>
<div class="a" style="left:1313px;top:781px;width:30px;height:16px;overflow:hidden"><span class="t " style="left:0.2px;top:0.0px;font-size:12px;line-height:16px;letter-spacing:-0.251px;color:#444;">01.04.2014</span></div>
<div class="a " style="left:300px;top:798px;width:1056px;height:16px;background:#f0f0f0"></div>
<div class="a " style="left:334px;top:798px;width:725px;height:16px;background:#c9c9c9"></div>
<svg class="a" style="left:317.3px;top:800.8px" width="8.6" height="11.4" viewBox="0 0 8.6 11.4"><path d="M7.3 1.3L1.85714 5.7L7.3 10.1" fill="none" stroke="#555" stroke-width="2.6"/></svg>
<svg class="a" style="left:1317.3px;top:800.8px" width="8.6" height="11.4" viewBox="0 0 8.6 11.4"><path d="M1.3 1.3L6.74286 5.7L1.3 10.1" fill="none" stroke="#555" stroke-width="2.6"/></svg>
<div class="a " style="left:300px;top:814px;width:1056px;height:1px;background:#c4c4c4"></div>
<svg class="a" style="left:302.6px;top:818.6px" width="20" height="20" viewBox="-10 -10 20 20"><rect x="-8" y="-8" width="12" height="11" fill="#fff" stroke="#777" stroke-width="1"/><rect x="-8" y="-8" width="12" height="3.4" fill="#2f5f9e"/><path d="M-4 -8V3M0 -8V3M-8 -1H4" stroke="#777" stroke-width=".8"/><circle cx="3" cy="2.4" r="3.8" fill="#fff" stroke="#555" stroke-width="1.5"/><path d="M5.8 5.4L8.8 8.6" stroke="#555" stroke-width="2.2"/></svg>
<svg class="a" style="left:331.9px;top:818.6px" width="20" height="20" viewBox="-10 -10 20 20"><rect x="-8" y="-8" width="16" height="16" fill="#f4b860" stroke="#b98c3c" stroke-width="1"/><rect x="-8" y="-8" width="16" height="4" fill="#2f5f9e"/><path d="M-2.8 -4V8M2.8 -4V8M-8 0H8M-8 4H8" stroke="#9a7a3a" stroke-width=".9"/></svg>
<svg class="a" style="left:360.7px;top:818.6px" width="20" height="20" viewBox="-10 -10 20 20"><rect x="-8" y="-8" width="11" height="10" fill="#f4b860" stroke="#b98c3c" stroke-width="1"/><rect x="-8" y="-8" width="11" height="3.2" fill="#2f5f9e"/><path d="M-4.4 -5V2M-0.8 -5V2M-8 -1.4H3" stroke="#9a7a3a" stroke-width=".8"/><rect x="-1.4" y="-1.4" width="9.6" height="9.6" fill="#fff" stroke="#666" stroke-width="1"/><path d="M0 6.8L3 3L5 5.4L6.2 4.4L7.4 6.8Z" fill="#6aa84f"/><circle cx="5.6" cy="1.6" r="1" fill="#f4b860"/></svg>
<svg class="a" style="left:389px;top:818.6px" width="20" height="20" viewBox="-10 -10 20 20"><path d="M8 0H-6M-0.6 -5.8L-6.6 0L-0.6 5.8" fill="none" stroke="#3b78b9" stroke-width="2.8"/></svg>
<svg class="a" style="left:417.6px;top:818.6px" width="20" height="20" viewBox="-10 -10 20 20"><circle cx="2.2" cy="-2.4" r="5.4" fill="#fff" stroke="#6e6e6e" stroke-width="1.2"/><path d="M-1.6 1.6L-6.8 7" stroke="#6e6e6e" stroke-width="2.4" stroke-linecap="round"/><path d="M3.8 -5V0.2L0.2 -2.4Z" fill="#3b78b9"/></svg>
<svg class="a" style="left:446.6px;top:818.6px" width="20" height="20" viewBox="-10 -10 20 20"><circle cx="2.2" cy="-2.4" r="5.4" fill="#fff" stroke="#6e6e6e" stroke-width="1.2"/><path d="M-1.6 1.6L-6.8 7" stroke="#6e6e6e" stroke-width="2.4" stroke-linecap="round"/><path d="M0.8 -5V0.2L4.4 -2.4Z" fill="#3b78b9"/></svg>
<svg class="a" style="left:476px;top:818.6px" width="20" height="20" viewBox="-10 -10 20 20"><path d="M-8 0H6M0.6 -5.8L6.6 0L0.6 5.8" fill="none" stroke="#3b78b9" stroke-width="2.8"/></svg>
<svg class="a" style="left:504.8px;top:818.6px" width="20" height="20" viewBox="-10 -10 20 20"><rect x="-7.6" y="-7.6" width="15.2" height="15.2" fill="#f4f4f4" stroke="#444" stroke-width="1" stroke-dasharray="2.4 1.6"/><path d="M-3 -3L3 3M3 -3L-3 3" stroke="#d0361e" stroke-width="2.2"/></svg>
<svg class="a" style="left:534.1px;top:818.6px" width="20" height="20" viewBox="-10 -10 20 20"><path d="M-2.6 -8H4L8 -4V7H-2.6Z" fill="#fff" stroke="#666" stroke-width="1"/><path d="M4 -8V-4H8" fill="none" stroke="#666" stroke-width="1"/><rect x="-8" y="-1.6" width="9.6" height="9.6" fill="#e9f5ec" stroke="#2e9a56" stroke-width="1.2"/><path d="M-5.6 1L-0.8 5.8M-0.8 1L-5.6 5.8" stroke="#2e9a56" stroke-width="1.5"/></svg>
<svg class="a" style="left:559.8px;top:818.6px" width="20" height="20" viewBox="-10 -10 20 20"><path d="M-5 -7.4H8L4.4 -4H-8Z" fill="#f4b860"/><path d="M-5 4.6H8L4.4 8H-8Z" fill="#2f5f9e"/><path d="M-7.4 -4V8M-4.6 -6.8V4.6M4.6 -4V8M7.4 -6.8V4.6" stroke="#d0361e" stroke-width="1" stroke-dasharray="1.2 1"/></svg>
<svg class="a" style="left:585.7px;top:825.3px" width="7.4" height="4.2" viewBox="0 0 7.4 4.2"><path d="M0 0H7.4L3.7 4.2Z" fill="#222"/></svg>
<svg class="a" style="left:608.9px;top:820.6px" width="16" height="16" viewBox="0 0 16 16"><path d="M0 0H16V16H2.6L0 13.4Z" fill="#3b78b9"/><rect x="2" y="0.9" width="12.2" height="7.3" fill="#fff"/><path d="M3.2 3.2H13M3.2 5.4H13" stroke="#8c8c8c" stroke-width="1"/><rect x="3" y="9.8" width="10" height="5.2" fill="#fff"/><rect x="5" y="11" width="2.6" height="4" fill="#6a6a6a"/></svg>
</body></html>
